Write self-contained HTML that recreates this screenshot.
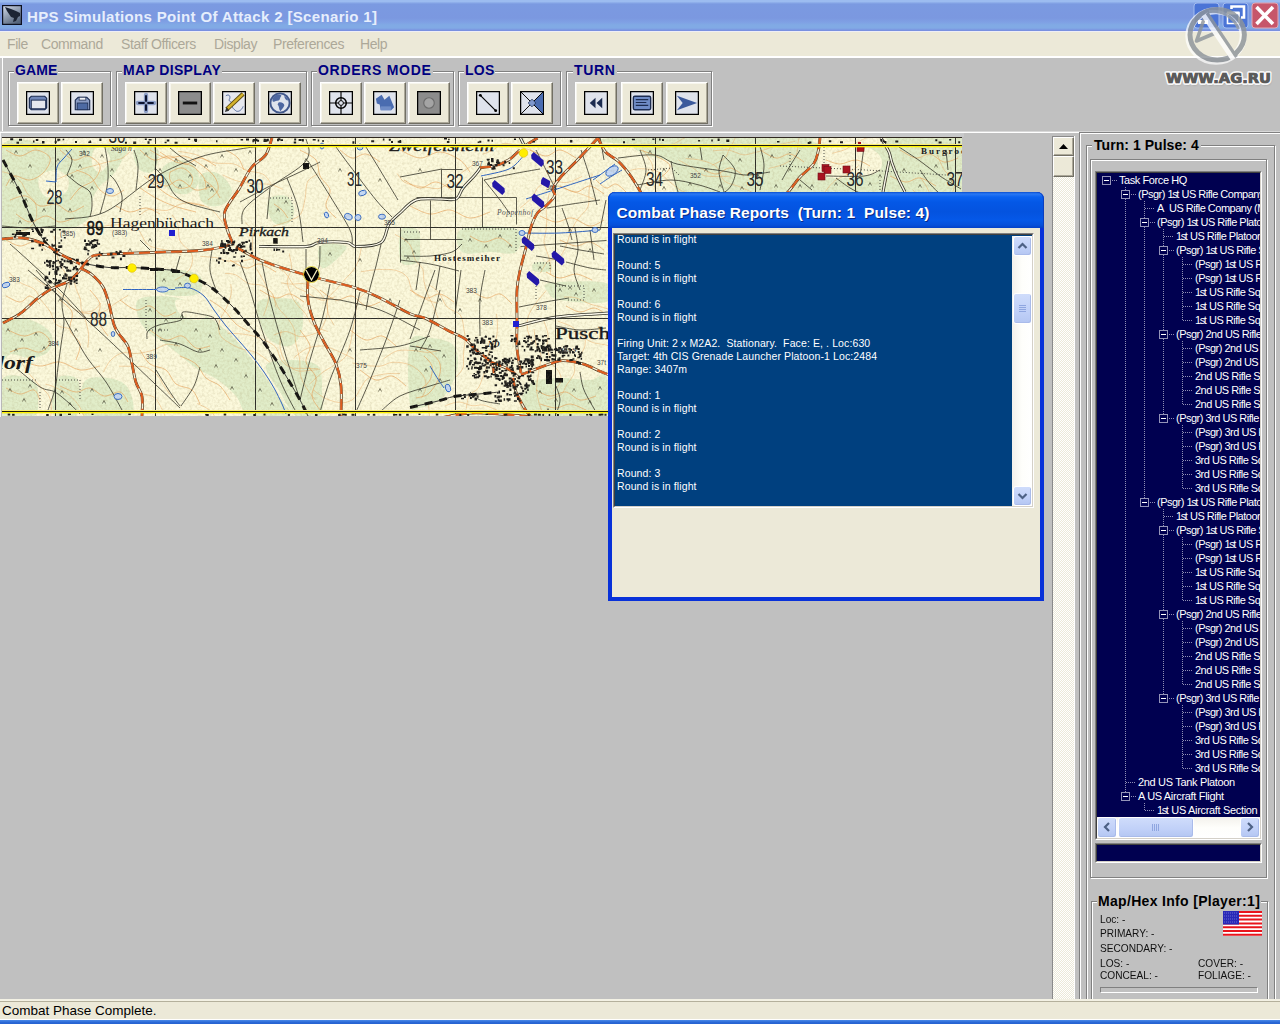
<!DOCTYPE html>
<html>
<head>
<meta charset="utf-8">
<title>HPS Simulations Point Of Attack 2 [Scenario 1]</title>
<style>
html,body{margin:0;padding:0;}
body{width:1280px;height:1024px;overflow:hidden;background:#c0c0c0;font-family:"Liberation Sans",sans-serif;position:relative;}
.abs{position:absolute;}
#titlebar{left:0;top:0;width:1280px;height:32px;background:linear-gradient(to bottom,#9cbcf0 0px,#9cbcf0 1.5px,#7b9ae1 4px,#7b98e0 18px,#7fa0e4 22px,#81aae5 25px,#81aae5 28px,#7990e0 30.500px,#7990e0 31px,#eeeef6 31px,#eeeef6 32px);}
#titletext{left:27px;top:8px;color:#e6eefc;font-weight:bold;font-size:15px;line-height:18px;white-space:nowrap;letter-spacing:0.345px;}
#menubar{left:0;top:32px;width:1280px;height:24px;background:#ece9d8;}
#menubar span{position:absolute;top:4px;font-size:14px;color:#aca899;white-space:nowrap;letter-spacing:-0.4px;}
#menuline{left:0;top:56px;width:1280px;height:2px;background:#fff;}
#toolbar{left:0;top:58px;width:1280px;height:74px;background:#c0c0c0;}
.grp{position:absolute;top:71px;height:55px;border:1px solid #808080;box-shadow:inset 1px 1px 0 #fff,1px 1px 0 #fff;box-sizing:border-box;}
.glabel{position:absolute;top:62px;font-weight:bold;font-size:14px;color:#000080;background:#c0c0c0;white-space:nowrap;line-height:16px;padding:0 1px;}
.tbtn{position:absolute;top:82px;width:42px;height:42px;background:#ece9d8;box-sizing:border-box;border:1px solid;border-color:#fff #716f64 #716f64 #fff;box-shadow:inset -1px -1px 0 #aca899,inset 1px 1px 0 #f7f6ee;}
.tbtn svg{position:absolute;left:8px;top:8px;}
#status{left:0;top:999px;width:1280px;height:21px;background:linear-gradient(to bottom,#f3f1e4 0px,#f3f1e4 2px,#b4b09c 2px,#b4b09c 3px,#ece9d8 3px,#ece9d8 20px,#fff 20px,#fff 21px);}
#statustext{left:2px;top:1003px;font-size:13.5px;color:#000;white-space:nowrap;}
#taskstrip{left:0;top:1020px;width:1280px;height:4px;background:linear-gradient(to bottom,#4a8ae8,#2a68d6 60%,#2562d0);}

.sbtn{background:#ece9d8;box-sizing:border-box;border:1px solid;border-color:#fff #716f64 #716f64 #fff;box-shadow:inset -1px -1px 0 #aca899;}
.xpb{box-sizing:border-box;border:1px solid #fff;border-radius:3px;background:linear-gradient(to bottom,#cfdcfb,#c0d0f8 60%,#b4c6f2);box-shadow:inset -1px -1px 0 #a9bbea, 0 0 0 0 #000;}
.tr{position:absolute;color:#fff;font-size:11px;line-height:14px;white-space:nowrap;letter-spacing:-0.5px;}
.mh{position:absolute;font-size:10.5px;line-height:13px;color:#111;white-space:nowrap;transform:scaleX(0.965);transform-origin:left center;}

.rt{position:absolute;left:2px;color:#fff;font-size:10.5px;line-height:13px;white-space:pre;letter-spacing:0.11px;}
</style>
</head>
<body>
<div id="titlebar" class="abs"></div>
<svg class="abs" style="left:2px;top:5px" width="20" height="20" viewBox="0 0 20 20"><defs><linearGradient id="ig" x1="0" y1="0" x2="0.6" y2="1"><stop offset="0" stop-color="#d4dcec"/><stop offset="1" stop-color="#55657c"/></linearGradient></defs><rect x="0.5" y="0.5" width="19" height="19" fill="url(#ig)" stroke="#0c1020" stroke-width="1.400"/><path d="M3 2 L9 4 L14 6 L18 8 L18 11 L16 12 L14 16 L11 17 L12 13 L9 12 L7 9 L5 6 Z" fill="#1c2434"/></svg>
<div id="titletext" class="abs">HPS Simulations Point Of Attack 2 [Scenario 1]</div>
<div id="menubar" class="abs">
<span style="left:7px">File</span><span style="left:41px">Command</span><span style="left:121px">Staff Officers</span><span style="left:214px">Display</span><span style="left:273px">Preferences</span><span style="left:360px">Help</span>
</div>
<div id="menuline" class="abs"></div>
<div id="toolbar" class="abs"></div>
<!--TOOLBAR-->
<div class="abs" style="left:0;top:58px;width:2px;height:74px;background:#c4c4c4;border-right:1px solid #fff"></div>
<div class="abs" style="left:0;top:131px;width:1280px;height:1px;background:#d8d8d8"></div>
<div class="abs" style="left:0;top:132px;width:1280px;height:1px;background:#fff"></div>
<div class="grp" style="left:8px;width:103px"></div><div class="glabel" style="left:14px;letter-spacing:0.1px">GAME</div>
<div class="grp" style="left:116px;width:191px"></div><div class="glabel" style="left:122px;letter-spacing:0.36px">MAP DISPLAY</div>
<div class="grp" style="left:311px;width:143px"></div><div class="glabel" style="left:317px;letter-spacing:0.7px">ORDERS MODE</div>
<div class="grp" style="left:458px;width:103px"></div><div class="glabel" style="left:464px;letter-spacing:0.23px">LOS</div>
<div class="grp" style="left:566px;width:146px"></div><div class="glabel" style="left:573px;letter-spacing:0.67px">TURN</div>
<!-- GAME buttons -->
<div class="tbtn" style="left:17px"><svg width="24" height="24" viewBox="0 0 25 25"><rect x="0.5" y="0.5" width="24" height="24" fill="#dfe3ec" stroke="#000" stroke-width="1.600"/><path d="M3.5 7.5 L5.5 5.5 H19.5 L21.5 7.5 V17.5 L19.5 19.5 H5.5 L3.5 17.5 Z" fill="#6f86b8" stroke="#1c2c50" stroke-width="1.2"/><rect x="5.5" y="9.5" width="15" height="9" fill="#e4e7ee" stroke="#1c2c50" stroke-width="1"/></svg></div>
<div class="tbtn" style="left:61px"><svg width="24" height="24" viewBox="0 0 25 25"><rect x="0.5" y="0.5" width="24" height="24" fill="#dfe3ec" stroke="#000" stroke-width="1.600"/><path d="M5.5 9.5 L8.5 6.5 H17.5 L20.5 9.5 V19.5 H5.5 Z" fill="#8a9cc4" stroke="#1c2c50" stroke-width="1.2"/><rect x="9.5" y="6.5" width="7" height="3" fill="#f2f3f6" stroke="#1c2c50" stroke-width=".8"/><rect x="7.500" y="12.5" width="11" height="7" fill="#4d6aa3" stroke="#1c2c50" stroke-width=".8"/></svg></div>
<!-- MAP DISPLAY buttons -->
<div class="tbtn" style="left:125px"><svg width="24" height="24" viewBox="0 0 25 25"><rect x="0.5" y="0.5" width="24" height="24" fill="#dfe3ec" stroke="#000" stroke-width="1.600"/><path d="M12.500 4 V21 M4 12.500 H21" stroke="#8ea0c8" stroke-width="4.500" stroke-linecap="round"/><path d="M12.500 4.500 V20.5 M4.500 12.500 H20.5" stroke="#0c1430" stroke-width="2.2"/><circle cx="12.500" cy="12.500" r="1.600" fill="#8ea0c8"/></svg></div>
<div class="tbtn" style="left:169px"><svg width="24" height="24" viewBox="0 0 25 25"><rect x="0.5" y="0.5" width="24" height="24" fill="#8c8c8c" stroke="#000" stroke-width="1.600"/><path d="M5 12.500 H20" stroke="#111" stroke-width="3"/></svg></div>
<div class="tbtn" style="left:213px"><svg width="24" height="24" viewBox="0 0 25 25"><rect x="0.5" y="0.5" width="24" height="24" fill="#e6e8ee" stroke="#000" stroke-width="1.600"/><path d="M4 5 C7 3 9 5 8 8 C6 11 10 11 11 13 C9 16 12 19 15 21 C18 22 21 19 22 16" fill="none" stroke="#51679a" stroke-width="1"/><path d="M22 3 L5 19" stroke="#5b4a12" stroke-width="4.600"/><path d="M22 3 L6 18" stroke="#d4b32c" stroke-width="2.600"/><path d="M3 22 L4.500 17.500 L7.500 20.500 Z" fill="#333"/></svg></div>
<div class="tbtn" style="left:259px"><svg width="24" height="24" viewBox="0 0 25 25"><rect x="0.5" y="0.5" width="24" height="24" fill="#dfe3ec" stroke="#000" stroke-width="1.600"/><circle cx="12.500" cy="12.500" r="10" fill="#dfe3ec" stroke="#42588c" stroke-width="2"/><path d="M6 6 C9 3 13 3 14 5 C12 7 13 9 11 10 C8 10 7 12 5 11 C4 9 5 7 6 6 Z M11 12 C14 11 17 13 17 15 C16 18 14 19 13 21 C11 19 12 16 10 14 Z M17 5 C19 6 21 8 21 10 C19 10 17 8 17 5 Z" fill="#4e67a0"/></svg></div>
<!-- ORDERS buttons -->
<div class="tbtn" style="left:320px"><svg width="24" height="24" viewBox="0 0 25 25"><rect x="0.5" y="0.5" width="24" height="24" fill="#dfe3ec" stroke="#000" stroke-width="1.600"/><path d="M12.500 1 V24 M1 12.500 H24" stroke="#000" stroke-width="1.200"/><circle cx="12.500" cy="12.500" r="5.500" fill="none" stroke="#000" stroke-width="1.600"/><circle cx="12.500" cy="12.500" r="2.500" fill="#dfe3ec" stroke="#000" stroke-width="1"/></svg></div>
<div class="tbtn" style="left:364px"><svg width="24" height="24" viewBox="0 0 25 25"><rect x="0.5" y="0.5" width="24" height="24" fill="#dfe3ec" stroke="#000" stroke-width="1.600"/><path d="M3 8 L9 4 L12 9 L17 5 L22 17 L19 20 L8 20 L7 14 L4 13 Z" fill="#4a6cb0"/><path d="M8 16 L19 16 L19 20 L8 20 Z" fill="#6f8cc6"/></svg></div>
<div class="tbtn" style="left:408px"><svg width="24" height="24" viewBox="0 0 25 25"><rect x="0.5" y="0.5" width="24" height="24" fill="#8c8c8c" stroke="#000" stroke-width="1.600"/><circle cx="12.500" cy="12.500" r="5.500" fill="#a4a4a4" stroke="#6c6c6c" stroke-width="1.200"/></svg></div>
<!-- LOS buttons -->
<div class="tbtn" style="left:467px"><svg width="24" height="24" viewBox="0 0 25 25"><rect x="0.5" y="0.5" width="24" height="24" fill="#dfe3ec" stroke="#000" stroke-width="1.600"/><path d="M4.500 4.500 L20.500 20.500" stroke="#000" stroke-width="1.200"/><circle cx="4.500" cy="4.500" r="1.500" fill="#000"/><circle cx="20.500" cy="20.500" r="1.500" fill="#000"/></svg></div>
<div class="tbtn" style="left:511px"><svg width="24" height="24" viewBox="0 0 25 25"><rect x="0.5" y="0.5" width="24" height="24" fill="#dfe3ec" stroke="#000" stroke-width="1.600"/><path d="M24 1 L12.500 12.500 L24 24 Z" fill="#4a6cb0"/><path d="M1 1 L24 24 M24 1 L1 24" stroke="#000" stroke-width="1"/><path d="M12.500 8.500 L16.500 12.500 L12.500 16.500 L8.500 12.500 Z" fill="#7f98cc" stroke="#1c2c50" stroke-width=".8"/></svg></div>
<!-- TURN buttons -->
<div class="tbtn" style="left:575px"><svg width="24" height="24" viewBox="0 0 25 25"><rect x="0.5" y="0.5" width="24" height="24" fill="#dfe3ec" stroke="#000" stroke-width="1.600"/><path d="M12 7 V18 L6 12.500 Z M19 7 V18 L13 12.500 Z" fill="#1c2c50"/></svg></div>
<div class="tbtn" style="left:621px"><svg width="24" height="24" viewBox="0 0 25 25"><rect x="0.5" y="0.5" width="24" height="24" fill="#dfe3ec" stroke="#000" stroke-width="1.600"/><rect x="3.500" y="5.500" width="18" height="14" rx="1.500" fill="#6f8cc6" stroke="#1c2c50" stroke-width="1.400"/><path d="M6 9 H19 M6 12 H17 M6 15 H19" stroke="#1c2c50" stroke-width="1.200"/></svg></div>
<div class="tbtn" style="left:666px"><svg width="24" height="24" viewBox="0 0 25 25"><rect x="0.5" y="0.5" width="24" height="24" fill="#dfe3ec" stroke="#000" stroke-width="1.600"/><path d="M2 5 L23 12.500 L2 20 L8 12.500 Z" fill="#3c5a9c"/></svg></div>
<!--/TOOLBAR-->
<!--MAP-->
<svg class="abs" style="left:0;top:133px" width="964" height="284" viewBox="0 133 964 284" font-family="'Liberation Serif',serif">
<rect x="0" y="133" width="964" height="4" fill="#c8c9ca"/>
<rect x="0" y="133" width="1" height="284" fill="#f4f4f4"/><rect x="1" y="137" width="1" height="280" fill="#b8b8b8"/>
<clipPath id="mc"><rect x="2" y="137" width="960" height="279"/></clipPath>
<g clip-path="url(#mc)">
<rect x="2" y="137" width="960" height="279" fill="#fcf9dc"/>
<g fill="#e1edc9"><path d="M2 146 C11.7 131 39.7 146 60 146 C80.3 146 113.7 143.7 124 146 C134.3 148.3 124 155 122 160 C120 165 115.7 171.7 112 176 C108.3 180.3 103.3 182 100 186 C96.7 190 93.7 195 92 200 C90.3 205 92.3 211.7 90 216 C87.7 220.3 83 223.7 78 226 C73 228.3 66.3 229.7 60 230 C53.7 230.3 46.7 227.7 40 228 C33.3 228.3 26.3 230.7 20 232 C13.7 233.3 5 250.3 2 236 C-1 221.7 -7.7 161 2 146 Z"/><path d="M136 147 C139.7 145.2 152.3 144.8 156 147 C159.7 149.2 158.7 155.8 158 160 C157.3 164.2 155 170.3 152 172 C149 173.7 143 172.3 140 170 C137 167.7 134.7 161.8 134 158 C133.3 154.2 132.3 148.8 136 147 Z"/><path d="M164 166 C167 163 174.7 159.7 180 160 C185.3 160.3 193 164 196 168 C199 172 199.7 179.7 198 184 C196.3 188.3 190.7 193 186 194 C181.3 195 174 192.7 170 190 C166 187.3 163 182 162 178 C161 174 161 169 164 166 Z"/><path d="M200 176 C202.3 171.7 209.7 171.3 214 172 C218.3 172.7 223 176.7 226 180 C229 183.3 232.3 188 232 192 C231.7 196 227.7 201.7 224 204 C220.3 206.3 214 207 210 206 C206 205 201.7 203 200 198 C198.3 193 197.7 180.3 200 176 Z"/><path d="M270 198 C273 195.3 282 194.3 286 196 C290 197.7 293.3 203.7 294 208 C294.7 212.3 293 219.3 290 222 C287 224.7 279.7 225.7 276 224 C272.3 222.3 269 216.3 268 212 C267 207.7 267 200.7 270 198 Z"/><path d="M320 246 C324 242.3 343 244 346 246 C349 248 342 254.3 338 258 C334 261.7 325 270 322 268 C319 266 316 249.7 320 246 Z"/><path d="M2 322 C5 315.3 13.7 317.7 20 318 C26.3 318.3 34.7 321 40 324 C45.3 327 50.7 331.3 52 336 C53.3 340.7 51.7 348.3 48 352 C44.3 355.7 36 357.7 30 358 C24 358.3 16.7 354 12 354 C7.3 354 3.7 363.3 2 358 C0.3 352.7 -1 328.7 2 322 Z"/><path d="M2 380 C5 373.3 14.3 375.3 20 376 C25.7 376.7 33 380 36 384 C39 388 38.3 394.7 38 400 C37.7 405.3 40 413.3 34 416 C28 418.7 7.3 422 2 416 C-3.3 410 -1 386.7 2 380 Z"/><path d="M56 380 C59.7 373.7 72 375.3 76 378 C80 380.7 80 389.7 80 396 C80 402.3 80.3 412.7 76 416 C71.7 419.3 57.3 422 54 416 C50.7 410 52.3 386.3 56 380 Z"/><path d="M84 382 C88 375.7 100.7 377 108 378 C115.3 379 124.3 381.7 128 388 C131.7 394.3 137.3 411.3 130 416 C122.7 420.7 91.7 421.7 84 416 C76.3 410.3 80 388.3 84 382 Z"/><path d="M156 272 C159.3 268.3 172.7 269.3 180 270 C187.3 270.7 196.7 272.3 200 276 C203.3 279.7 202.7 288.7 200 292 C197.3 295.3 190.7 296 184 296 C177.3 296 164.7 296 160 292 C155.3 288 152.7 275.7 156 272 Z"/><path d="M138 300 C141.7 296.7 152.3 296 160 296 C167.7 296 177.3 297.3 184 300 C190.7 302.7 194.7 308.3 200 312 C205.3 315.7 210.7 318 216 322 C221.3 326 227 331 232 336 C237 341 241 346 246 352 C251 358 256.7 364.7 262 372 C267.3 379.3 273.3 388.7 278 396 C282.7 403.3 294.7 412.7 290 416 C285.3 419.3 259 419.3 250 416 C241 412.7 241.3 402 236 396 C230.7 390 224.7 384.7 218 380 C211.3 375.3 203 372.7 196 368 C189 363.3 182 356.7 176 352 C170 347.3 165 343.7 160 340 C155 336.3 149.7 334 146 330 C142.3 326 139.3 321 138 316 C136.7 311 134.3 303.3 138 300 Z"/><path d="M258 302 C261.3 298 273 297.7 280 298 C287 298.3 296.3 298.7 300 304 C303.7 309.3 303.7 323 302 330 C300.3 337 295.3 344.3 290 346 C284.7 347.7 275 344 270 340 C265 336 262 328.3 260 322 C258 315.7 254.7 306 258 302 Z"/><path d="M266 366 C267.7 360.7 281.3 360 290 360 C298.7 360 312.7 360.7 318 366 C323.3 371.3 321.7 383.7 322 392 C322.3 400.3 324.3 412 320 416 C315.7 420 302.7 420 296 416 C289.3 412 285 400.3 280 392 C275 383.7 264.3 371.3 266 366 Z"/><path d="M401 230 C403.8 224.7 414.8 227.3 418 230 C421.2 232.7 420 240.7 420 246 C420 251.3 421.2 259.3 418 262 C414.8 264.7 403.8 267.3 401 262 C398.2 256.7 398.2 235.3 401 230 Z"/><path d="M462 229 C471 225.2 507 225.2 516 229 C525 232.8 520.3 248.2 516 252 C511.7 255.8 499 252 490 252 C481 252 466.7 255.8 462 252 C457.3 248.2 453 232.8 462 229 Z"/><path d="M534 263 C536.7 261.7 547.3 261.7 550 263 C552.7 264.3 552.7 269.7 550 271 C547.3 272.3 536.7 272.3 534 271 C531.3 269.7 531.3 264.3 534 263 Z"/><path d="M550 283 C559.7 281.500 596.7 279.8 606 283 C615.3 286.2 613.7 299.2 606 302 C598.3 304.8 569.7 301.7 560 300 C550.3 298.3 549.7 294.8 548 292 C546.3 289.2 540.3 284.500 550 283 Z"/><path d="M410 342 C413.3 331 423 337.7 430 338 C437 338.3 447.3 340 452 344 C456.7 348 458 355.3 458 362 C458 368.7 455 377.7 452 384 C449 390.3 445.3 396 440 400 C434.7 404 425 407.3 420 408 C415 408.7 411.7 415 410 404 C408.3 393 406.7 353 410 342 Z"/><path d="M530 384 C535.7 377.7 550 378.7 560 378 C570 377.3 582.3 380.3 590 380 C597.7 379.7 603.3 370 606 376 C608.7 382 619.3 409.3 606 416 C592.7 422.7 538.7 421.3 526 416 C513.3 410.7 524.3 390.3 530 384 Z"/><path d="M636 146 C644.3 144.3 672.7 146 700 146 C727.3 146 766.7 146 800 146 C833.3 146 873 146 900 146 C927 146 951.7 138 962 146 C972.3 154 972.3 186 962 194 C951.7 202 927 194 900 194 C873 194 833.3 194 800 194 C766.7 194 720.3 194 700 194 C679.7 194 682.3 197 678 194 C673.7 191 675.3 181.3 674 176 C672.7 170.7 674 165.3 670 162 C666 158.7 655.7 158.7 650 156 C644.3 153.3 627.7 147.7 636 146 Z"/><path d="M636 137 C690.3 135.8 907.7 135.8 962 137 C1016.3 138.2 1016.3 142.8 962 144 C907.7 145.2 690.3 145.2 636 144 C581.7 142.8 581.7 138.2 636 137 Z"/></g>
<g fill="#fcf9dc"><path d="M40 176 C42.7 172.7 51.3 169.7 56 170 C60.7 170.3 66.3 174.3 68 178 C69.7 181.7 69 188.7 66 192 C63 195.3 54.3 198.3 50 198 C45.7 197.7 41.7 193.7 40 190 C38.3 186.3 37.3 179.3 40 176 Z"/><path d="M94 150 C96 147.3 101.3 146.3 104 148 C106.7 149.7 110.7 156 110 160 C109.3 164 103 171.3 100 172 C97 172.7 93 167.7 92 164 C91 160.3 92 152.7 94 150 Z"/><path d="M822 147 C828.7 142.2 854.3 145.500 864 147 C873.7 148.500 877.3 152.2 880 156 C882.7 159.8 882.7 166.7 880 170 C877.3 173.3 873.3 175 864 176 C854.7 177 831 180.8 824 176 C817 171.2 815.3 151.8 822 147 Z"/><path d="M820 137 C830 135.8 870 135.8 880 137 C890 138.2 890 142.8 880 144 C870 145.2 830 145.2 820 144 C810 142.8 810 138.2 820 137 Z"/><path d="M176 300 C178.7 298.3 191 301.3 196 304 C201 306.7 206 313.3 206 316 C206 318.7 200.3 320.3 196 320 C191.7 319.7 183.3 317.3 180 314 C176.7 310.7 173.3 301.7 176 300 Z"/></g>
<path fill="none" stroke="#e8a25c" stroke-width="0.8" opacity=".8" d="M150 150 C152.7 151.3 160.3 157 166 158 C171.7 159 178.3 155 184 156 C189.7 157 195 160.7 200 164 C205 167.3 211 171.7 214 176 C217 180.3 219 186 218 190 C217 194 209.7 198.3 208 200 M160 152 C162.7 153.7 170.7 159.7 176 162 C181.3 164.3 187.3 163.3 192 166 C196.7 168.7 201.7 174 204 178 C206.3 182 205.7 188 206 190 M170 172 C172 171.3 178.3 167.3 182 168 C185.7 168.7 190.7 173 192 176 C193.3 179 192.3 184 190 186 C187.7 188 181.3 189 178 188 C174.7 187 171.3 182.7 170 180 C168.7 177.3 170 173.3 170 172 M144 176 C146 177.7 151.7 182.7 156 186 C160.3 189.3 165 193.3 170 196 C175 198.7 180.3 200.3 186 202 C191.7 203.7 201 205.3 204 206 M140 188 C142.7 189.7 150.3 195 156 198 C161.7 201 167.3 203.7 174 206 C180.7 208.3 192.3 211 196 212 M226 150 C228 151.3 235 154.7 238 158 C241 161.3 243 168 244 170 M6 150 C8.3 151 15 156 20 156 C25 156 31 149.7 36 150 C41 150.3 48.7 154.3 50 158 C51.3 161.7 47.3 168.3 44 172 C40.7 175.7 35 179.3 30 180 C25 180.7 18 175 14 176 C10 177 7.3 184.3 6 186 M10 200 C12.7 199.3 21 195 26 196 C31 197 35 204.7 40 206 C45 207.3 51 203 56 204 C61 205 65.3 211.7 70 212 C74.7 212.3 81.7 207 84 206 M16 214 C18.3 215.3 25 221.7 30 222 C35 222.3 41 216 46 216 C51 216 55.3 221.7 60 222 C64.7 222.3 71.7 218.7 74 218 M60 150 C62.3 151.7 69.3 159 74 160 C78.7 161 83.7 155 88 156 C92.3 157 99 162 100 166 C101 170 97.3 176.3 94 180 C90.7 183.7 84 184.7 80 188 C76 191.3 71.7 198 70 200 M76 170 C78.3 171 86 172.7 90 176 C94 179.3 96.3 186.7 100 190 C103.7 193.3 108 196 112 196 C116 196 122 191 124 190 M140 150 C142.3 151.7 149 159 154 160 C159 161 164.7 155.3 170 156 C175.3 156.7 181 163.7 186 164 C191 164.3 195 157.7 200 158 C205 158.3 213.3 164.7 216 166 M150 180 C152.7 181 161 186 166 186 C171 186 175 179.3 180 180 C185 180.7 190.7 189 196 190 C201.3 191 209.3 186.7 212 186 M204 180 C205.7 181.3 211.3 185 214 188 C216.7 191 219 196.3 220 198 M116 206 C118.3 207 125 211.7 130 212 C135 212.3 141 207.7 146 208 C151 208.3 157.7 213 160 214 M274 204 C275.3 205 279.7 207.7 282 210 C284.3 212.3 287 216.7 288 218 M300 150 C302.7 151.7 312.7 155.7 316 160 C319.3 164.3 317.7 171 320 176 C322.3 181 329 185 330 190 C331 195 325 201.3 326 206 C327 210.7 334.3 216 336 218 M340 150 C342 151.3 347.7 157.3 352 158 C356.3 158.7 361.3 153.3 366 154 C370.7 154.7 377.7 160.7 380 162 M400 150 C403.3 151.3 413.3 157.7 420 158 C426.7 158.3 433.3 151.7 440 152 C446.7 152.3 455 156.7 460 160 C465 163.3 468.3 170 470 172 M404 180 C406.7 181.3 414.7 187.7 420 188 C425.3 188.3 430.7 181.7 436 182 C441.3 182.3 449.3 188.7 452 190 M410 206 C413.3 207.3 423.3 213.3 430 214 C436.7 214.7 443.3 209.3 450 210 C456.7 210.7 463.3 217.7 470 218 C476.7 218.3 486.7 213 490 212 M470 236 C472.3 237 479 241.7 484 242 C489 242.3 495.3 237.3 500 238 C504.7 238.7 510 244.7 512 246 M530 150 C532.7 151 541 156 546 156 C551 156 555 149.7 560 150 C565 150.3 573.3 156.7 576 158 M560 186 C562.7 187 571 192 576 192 C581 192 585.3 185.7 590 186 C594.7 186.3 601.7 192.7 604 194 M540 216 C542.7 217 550.7 221.7 556 222 C561.3 222.3 566.3 217.3 572 218 C577.7 218.7 584.7 225.7 590 226 C595.3 226.3 601.7 221 604 220 M560 240 C562.7 241 571 245.7 576 246 C581 246.3 585.3 241.3 590 242 C594.7 242.7 601.7 248.7 604 250 M546 272 C548.3 273 555 277.7 560 278 C565 278.3 570.7 273.7 576 274 C581.3 274.3 589.3 279 592 280 M6 240 C8.3 241 15.3 245.7 20 246 C24.7 246.3 29.7 241.3 34 242 C38.3 242.7 44 248.7 46 250 M6 296 C8.3 297 16 302 20 302 C24 302 26.7 295.7 30 296 C33.3 296.3 38.3 302.7 40 304 M8 330 C10.7 331 18.7 335.7 24 336 C29.3 336.3 35.7 331 40 332 C44.3 333 50 338.7 50 342 C50 345.3 44.3 351 40 352 C35.7 353 29 348 24 348 C19 348 12.3 351.3 10 352 M20 360 C23.3 361 33.3 365.7 40 366 C46.7 366.3 53.3 361.3 60 362 C66.7 362.7 73.3 369.3 80 370 C86.7 370.7 96.7 366.7 100 366 M6 388 C8.3 389 15.3 393.7 20 394 C24.7 394.3 30.7 389 34 390 C37.3 391 39 398.3 40 400 M60 300 C62 302 70.3 307 72 312 C73.7 317 68.7 324.7 70 330 C71.3 335.3 79 339 80 344 C81 349 76.7 357.3 76 360 M90 290 C91.7 292.3 98.7 299 100 304 C101.3 309 96.7 314.7 98 320 C99.3 325.3 106.3 333.3 108 336 M60 386 C62.7 387 71 391.7 76 392 C81 392.3 85.3 387.3 90 388 C94.7 388.7 99 395.3 104 396 C109 396.7 116 391 120 392 C124 393 126.7 400.3 128 402 M120 300 C122.7 301.7 131 309 136 310 C141 311 145.3 305 150 306 C154.7 307 159.7 315 164 316 C168.3 317 174 312.7 176 312 M150 330 C152.7 331.7 160.7 339 166 340 C171.3 341 177 334.7 182 336 C187 337.3 191.3 346.3 196 348 C200.7 349.7 207.7 346.3 210 346 M140 350 C141.7 352.3 145.7 360.7 150 364 C154.3 367.3 161.7 366.7 166 370 C170.3 373.3 171.7 380.7 176 384 C180.3 387.3 188 386.7 192 390 C196 393.3 198.7 401.7 200 404 M180 356 C182.7 357.3 191.7 360.3 196 364 C200.3 367.7 202 374.3 206 378 C210 381.7 216 382.3 220 386 C224 389.7 228.3 397.7 230 400 M210 300 C212.3 301.7 219.7 306 224 310 C228.3 314 231.7 320.3 236 324 C240.3 327.7 247.7 330.7 250 332 M260 290 C262.7 291.3 271 297.3 276 298 C281 298.7 285.3 293.3 290 294 C294.7 294.7 301.7 300.7 304 302 M230 260 C232.7 261.3 241 267.3 246 268 C251 268.7 255 263.3 260 264 C265 264.7 273.3 270.7 276 272 M320 290 C322.7 291.7 330.7 299 336 300 C341.3 301 347 295 352 296 C357 297 361.3 305 366 306 C370.7 307 377.7 302.7 380 302 M350 330 C352.7 331.7 360.7 339 366 340 C371.3 341 377 335 382 336 C387 337 393.7 344.3 396 346 M360 370 C362.7 371.7 370.7 379 376 380 C381.3 381 387 375 392 376 C397 377 403.7 384.3 406 386 M300 330 C301.7 332.7 309 340.7 310 346 C311 351.3 305 356.7 306 362 C307 367.3 315 372.3 316 378 C317 383.7 311.3 390.7 312 396 C312.7 401.3 318.7 407.7 320 410 M416 346 C418.3 347 426 349 430 352 C434 355 438.7 359.3 440 364 C441.3 368.7 440 375 438 380 C436 385 431.7 391 428 394 C424.3 397 418 397.3 416 398 M424 356 C425.3 357.7 431 362 432 366 C433 370 431.7 376.3 430 380 C428.3 383.7 423.3 386.7 422 388 M410 290 C412.7 291.3 421 297.3 426 298 C431 298.7 435.3 293.3 440 294 C444.7 294.7 451.7 300.7 454 302 M470 290 C472.7 291.3 481 297.3 486 298 C491 298.7 495.7 293 500 294 C504.3 295 510 302.3 512 304 M536 390 C538.3 391 545 395.7 550 396 C555 396.3 561 391.3 566 392 C571 392.7 575 399.3 580 400 C585 400.7 593.3 396.7 596 396 M540 404 C542.7 404.7 551 408 556 408 C561 408 565 403.7 570 404 C575 404.3 583.3 409 586 410 M566 306 C568.3 307 575.3 311.7 580 312 C584.7 312.3 589.7 307.7 594 308 C598.3 308.3 604 313 606 314 M640 150 C642.7 151 651 153.3 656 156 C661 158.7 669.3 162.3 670 166 C670.7 169.7 664 175 660 178 C656 181 648.3 183 646 184 M700 168 C702.7 169 711 174 716 174 C721 174 725.3 167.7 730 168 C734.7 168.3 741.7 174.7 744 176 M760 150 C762.7 151.3 771 157.3 776 158 C781 158.7 785.3 153.3 790 154 C794.7 154.7 801.7 160.7 804 162 M826 160 C828.3 160.7 835 164 840 164 C845 164 851 159.7 856 160 C861 160.3 867.7 165 870 166 M900 150 C902.7 151.3 911 157.3 916 158 C921 158.7 925.3 153.3 930 154 C934.7 154.7 939.3 161.3 944 162 C948.7 162.7 955.7 158.7 958 158 M890 176 C892.7 177 901 181.7 906 182 C911 182.3 915 177.3 920 178 C925 178.7 933.3 184.7 936 186 M596 180 C597.7 181.3 602.7 187.3 606 188 C609.3 188.7 612.7 183.3 616 184 C619.3 184.7 624.3 190.7 626 192"/>
<path fill="none" stroke="#e8a25c" stroke-width="0.8" opacity=".55" d="M272.500 294.4 C273.6 296.7 276.3 304.4 278.7 308.3 C281.1 312.2 284.500 314.3 287.1 317.8 C289.6 321.2 292.6 324.7 294 329 C295.500 333.3 295 338.6 295.9 343.6 C296.9 348.6 298.8 353.6 299.6 358.9 C300.4 364.3 299.3 370.6 300.500 375.6 C301.8 380.6 304.500 384.9 307 388.9 C309.4 392.9 313.8 397.9 315.2 399.7 M177.9 151.2 C180.8 151.7 190.7 153 195.500 154.500 C200.3 156 203 158.6 206.6 160.1 C210.1 161.500 212.4 162.500 216.9 163.2 C221.4 163.8 228.7 162.7 233.7 163.9 C238.6 165.1 241.6 168.6 246.6 170.3 C251.500 172 259.1 172.1 263.1 174.2 C267.1 176.3 269.4 181.500 270.6 182.9 M54.1 235.8 C54.4 237.500 55.3 241.6 56.1 245.8 C56.8 250 56.7 256.1 58.500 261 C60.2 266 64.7 271.1 66.6 275.7 C68.4 280.2 69.1 286.3 69.6 288.4 M518.9 401.500 C519.9 404 523.3 411.2 524.8 416.6 C526.2 422 525.9 428.8 527.6 433.8 C529.3 438.8 532.2 443.4 535.1 446.6 C537.9 449.8 543.2 452 544.8 453.1 M361.6 245.9 C361.1 248 360.2 254.7 359 258.6 C357.7 262.500 356.2 266.1 353.9 269.4 C351.6 272.8 348.4 275.4 345.4 278.9 C342.3 282.4 338.4 286.9 335.500 290.2 C332.6 293.6 329 295.2 327.7 299 C326.500 302.8 327.1 308.7 328.1 313.1 C329.2 317.500 333.1 323.3 334.1 325.3 M313 389.7 C315.2 391.3 321.4 396.7 326.3 398.8 C331.3 401 338 402.9 342.6 402.8 C347.3 402.7 351.1 400.9 354.1 398.4 C357.2 395.9 358.500 391.3 360.8 387.9 C363.2 384.6 364.1 380.7 368.2 378.3 C372.3 376 380 374.7 385.2 373.9 C390.500 373.1 397.500 373.6 399.9 373.500 M421.2 398.4 C422 396.7 425.6 392 425.9 388.1 C426.3 384.3 425.8 379.3 423.1 375.500 C420.500 371.6 415.1 367.1 410 364.9 C405 362.7 397.7 362.1 392.7 362.3 C387.7 362.500 384.9 365.8 379.9 366.2 C374.8 366.6 367 365.500 362.4 364.9 C357.9 364.4 354.1 363.3 352.4 363 M56.2 179.8 C58.6 178.8 65.7 175.4 70.500 173.500 C75.3 171.500 80.9 169.4 84.9 168.1 C89 166.7 91.4 166.4 95 165.4 C98.6 164.4 102.2 163.4 106.6 162.2 C111 161.1 117.3 160.3 121.2 158.6 C125 156.9 128.3 153.1 129.8 152.1 M543.6 320.3 C544.4 322.6 547.4 330 548 334.3 C548.6 338.6 546.6 341.2 547.2 345.9 C547.7 350.500 549.3 357.9 551.2 362.2 C553.1 366.500 557.2 368.3 558.8 371.500 C560.4 374.8 561.8 378.500 560.9 381.8 C559.9 385.2 554.6 389.9 553.3 391.6 M230.8 284.2 C230.8 285.9 231.8 290.4 231.1 294.4 C230.3 298.4 228.2 303.7 226.2 308.2 C224.2 312.8 220.3 317.3 219.3 321.8 C218.3 326.3 218.2 331.7 220.2 335.4 C222.2 339.1 228 341.9 231.500 344.1 C235.1 346.3 237.3 347.4 241.4 348.8 C245.4 350.2 251.2 350.3 256 352.500 C260.7 354.7 267.500 360.6 269.8 362.2 M8.4 271.8 C10.3 273.6 15.6 279.500 19.9 282.4 C24.2 285.3 30.7 286.3 34.2 289.2 C37.7 292.1 38.2 296.3 40.8 299.9 C43.4 303.500 47.2 306.9 49.9 311 C52.500 315.2 53.2 321.9 56.7 324.8 C60.2 327.8 68.3 328 70.6 328.6 M197.2 403.4 C199.7 404.9 208.8 408.3 212.2 412.3 C215.6 416.3 214.9 422.6 217.500 427.4 C220.2 432.2 224.8 437.2 227.8 440.9 C230.9 444.7 234.500 448.4 235.8 449.9 M19 358.8 C20.500 361.1 24.9 368.1 28.3 372.6 C31.8 377.1 36.3 381.9 39.8 385.9 C43.3 389.9 47.4 392.2 49.3 396.500 C51.2 400.9 51.4 407 51.2 411.9 C51 416.8 48.6 423.6 48.1 426 M309.500 384.1 C311.6 382.2 318.3 375.7 322.3 372.6 C326.4 369.500 330 368.1 333.8 365.4 C337.6 362.8 342.500 360.500 345.3 356.9 C348 353.2 349.1 348 350.4 343.3 C351.7 338.7 352.1 333.1 352.9 329 C353.7 324.9 354.3 323.2 355.1 318.6 C355.9 314 355.8 305.8 357.7 301.3 C359.500 296.8 364.9 293.2 366.3 291.500 M540.500 272.9 C541.8 270.9 545.3 263.3 548.2 260.9 C551.2 258.500 555.3 261 558.3 258.6 C561.3 256.1 564 250.500 566 246.3 C568 242 568.500 237.500 570.4 233 C572.3 228.500 574.500 223.8 577.500 219.4 C580.4 215 586.1 211.7 588 206.8 C589.9 202 588.3 195.8 589.1 190.3 C589.8 184.8 591.9 176.6 592.4 173.8 M326.7 301.4 C326.8 303.4 328.2 309.2 327.2 313.9 C326.3 318.500 323.8 325.7 321.1 329.2 C318.4 332.7 314.9 333.500 311.3 334.7 C307.7 335.9 303.500 337 299.4 336.500 C295.2 335.9 290.9 331.8 286.6 331.6 C282.3 331.3 275.8 334.4 273.7 335 M547 399.8 C549.3 399 557.7 397.1 560.9 394.8 C564.1 392.4 564 389.3 566.2 385.8 C568.4 382.3 572.500 377.6 574 373.6 C575.500 369.7 573.2 366.4 575 362.1 C576.8 357.7 583 352.7 584.6 347.4 C586.2 342 584.6 332.7 584.6 329.7 M281.2 282.9 C283 283.1 287.7 284 291.500 284.1 C295.4 284.3 300.2 282.9 304.4 283.8 C308.6 284.7 313.6 287.1 316.9 289.6 C320.2 292 322.8 296.9 324 298.4 M563.9 297 C565.9 297.1 571.4 296.7 575.9 297.9 C580.4 299.2 585.6 302.500 590.9 304.3 C596.1 306.2 602.4 306.7 607.4 308.8 C612.500 311 616.6 315 621.3 317.1 C626 319.2 631.1 320.3 635.8 321.3 C640.500 322.3 647.1 322.8 649.3 323.1 M140.8 393.7 C143.1 394.4 150.8 394.7 154.4 397.6 C158.1 400.4 160.7 406.8 162.7 410.7 C164.6 414.500 165.6 417 166.3 420.6 C167.1 424.3 166.6 428.8 167.1 432.7 C167.500 436.6 168 440.3 169 444 C169.9 447.8 172.6 451.1 172.8 455.3 C172.9 459.500 170.3 466.7 169.8 469 M383.500 358.9 C385.8 357.500 392.2 352.1 397.3 350.8 C402.4 349.4 409.1 350.4 414.1 350.6 C419.2 350.9 423.1 352.4 427.500 352.4 C431.8 352.3 438.3 350.500 440.4 350.2 M557.8 321.2 C560.1 322.1 567.9 324.4 571.6 326.6 C575.2 328.8 576.3 331.8 579.7 334.4 C583.2 337.1 587.6 340.6 592.4 342.4 C597.1 344.3 603.8 343.7 608.1 345.7 C612.4 347.7 616.4 353.1 618.1 354.6 M545.9 187.2 C548.1 187.1 555 185.8 559.2 186.4 C563.3 187 567.1 189.8 570.9 191.1 C574.6 192.4 577.500 192.7 581.7 194.2 C585.8 195.7 593.4 198.9 595.7 199.9 M83.9 224.9 C86.6 225.1 95.4 226.4 100.1 226.4 C104.8 226.4 107.7 225.2 112.2 225 C116.7 224.7 122.7 224.3 126.9 225 C131.2 225.6 134.500 226 137.8 229.1 C141.1 232.2 143.6 240.500 146.8 243.6 C149.9 246.8 152.500 246.9 156.500 248.2 C160.500 249.4 166.9 250 170.9 251.1 C175 252.2 179.3 254 180.9 254.6 M225.2 273.500 C226.9 273.7 231.8 273.2 235.7 274.9 C239.500 276.500 244.1 281.7 248.4 283.4 C252.7 285.2 257.6 283.6 261.6 285.3 C265.6 287.1 270 290.1 272.4 293.8 C274.8 297.500 275.4 305.3 276 307.6 M222.8 175 C225.1 176 231.500 179.3 236.500 180.8 C241.4 182.2 246.8 183.2 252.3 183.8 C257.8 184.4 264.500 183.4 269.6 184.4 C274.6 185.3 280.6 188.500 282.8 189.3 M395 234.4 C397.500 236 406.2 239.9 409.500 244.1 C412.8 248.2 412.7 254.9 414.9 259.1 C417.1 263.4 421.2 265.7 422.8 269.4 C424.3 273.1 423.2 277.3 424 281.3 C424.8 285.4 426 290 427.4 293.8 C428.8 297.6 430.9 300.4 432.6 304.4 C434.4 308.4 437 315.7 437.8 318 M455.9 377.3 C457 375.7 461.8 371.500 463 367.7 C464.3 363.9 463 359 463.4 354.3 C463.7 349.7 465 344.3 465 340.1 C465.1 335.9 464.7 333.500 463.9 329.3 C463.1 325.1 463.1 318.8 460.3 315.1 C457.500 311.3 450.7 310.6 447.1 307 C443.6 303.3 442.1 296.7 439 292.9 C436 289.2 430.500 285.9 428.8 284.500 M293.8 357.6 C296.1 356.1 302.3 350.4 307.2 348.500 C312.1 346.6 318 345.500 323.500 346.1 C328.9 346.7 334.6 349.9 339.7 352 C344.8 354.2 351.6 357.8 354 358.9 M445.3 405.7 C447.500 405.1 454.3 402 458.8 402 C463.3 402 468.1 405.2 472.2 405.7 C476.3 406.2 479.3 404.3 483.500 405.1 C487.6 405.8 492.500 408.4 497.2 410.3 C501.9 412.1 509.1 415.4 511.500 416.4 M360.8 271.8 C363.7 271.4 372.2 269.8 378 269.6 C383.7 269.3 390.6 269 395.500 270.3 C400.4 271.6 404.4 273.500 407.3 277.2 C410.3 280.8 409.8 288.4 413.1 292.1 C416.4 295.9 422.8 297.9 426.9 299.7 C431 301.6 435.9 302.7 437.7 303.3 M473 164.9 C471.2 166.2 466.1 169.6 462.3 172.3 C458.500 175.1 453.9 179 450.2 181.7 C446.4 184.3 443.4 187.3 439.9 188.3 C436.3 189.3 433 188.1 428.8 187.7 C424.7 187.2 419.1 186.500 415 185.500 C410.9 184.6 407.1 184 404.1 182 C401.1 180 398.3 174.9 397.1 173.4 M534 329 C534.4 331.7 535 340.7 536.1 345 C537.3 349.4 540.6 351.3 541 355.3 C541.500 359.4 539.8 364.4 539.1 369.500 C538.4 374.6 537 381.3 536.8 385.8 C536.500 390.3 536.6 392.1 537.500 396.4 C538.4 400.6 539.9 407.2 542 411.2 C544 415.3 547 416.7 549.8 420.6 C552.500 424.500 556.9 432.2 558.3 434.500 M227.500 333.2 C230.3 333.4 238.9 333.4 244.3 334.3 C249.8 335.1 255.2 336.3 260.4 338.4 C265.500 340.4 271.8 343.1 275.3 346.7 C278.8 350.4 278.7 356.7 281.3 360.1 C283.9 363.6 287.1 366.2 290.7 367.6 C294.4 368.9 298.6 368.2 303.2 368.3 C307.8 368.500 315.8 368.6 318.3 368.6 M80.6 312.6 C83 312.8 91 314 95.3 313.6 C99.500 313.2 102.7 312.1 106.1 310.4 C109.500 308.6 112.1 305.7 115.7 303.2 C119.3 300.7 125.8 296.8 127.9 295.500 M200.2 256.3 C202.9 256.6 212.1 257 216.4 257.8 C220.8 258.500 222.1 260.3 226.3 260.8 C230.4 261.4 236.6 261.4 241.500 261.1 C246.3 260.7 250.7 258.500 255.4 258.7 C260.1 258.9 265 260 269.6 262.1 C274.2 264.2 280.7 269.7 283 271.2 M428.6 404.6 C428.7 407.1 429.7 415.1 429.2 419.8 C428.7 424.6 426.7 429 425.6 432.9 C424.6 436.8 424.7 439.500 422.9 443.4 C421.1 447.3 417.8 452.4 414.8 456.1 C411.8 459.7 406.6 463.8 405 465.4 M549.2 193.500 C548.7 196.2 546.7 204.8 546.3 209.500 C545.9 214.2 547 217.500 546.8 221.4 C546.7 225.3 546.1 229.3 545.6 232.9 C545.2 236.500 543.500 238.6 544.1 243 C544.8 247.500 548.500 254.4 549.6 259.7 C550.6 265.1 550.500 272.500 550.6 275 M482.7 154.2 C484.4 153.500 489.8 151.8 493.1 150 C496.4 148.3 499.2 144.7 502.500 143.8 C505.8 142.9 508.6 143.7 512.9 144.6 C517.2 145.6 523.9 147.8 528.1 149.4 C532.4 150.9 536.6 153.1 538.3 153.9 M245.4 222.6 C246.500 224.1 250.8 227.500 252 231.3 C253.1 235.2 252.1 240.3 252.4 245.500 C252.7 250.7 252.6 257.7 253.9 262.6 C255.2 267.500 257.9 270.500 260.1 274.8 C262.4 279.1 265.9 284 267.3 288.2 C268.6 292.500 269 295.6 268.4 300.2 C267.8 304.7 264.4 313.1 263.6 315.7 M546.1 290.6 C544.4 292.7 538.7 299.2 535.7 303.4 C532.8 307.6 529.8 311.6 528.4 315.9 C527.1 320.2 526.9 324.9 527.500 329.3 C528.1 333.6 531.500 339.8 532.2 341.9 M273 226.4 C275.7 225.500 284.6 223 289.2 220.9 C293.8 218.9 297.9 217.8 300.6 214.1 C303.2 210.4 303.9 204.1 305.1 198.6 C306.2 193.2 305.500 185.6 307.6 181.500 C309.8 177.3 316.3 175.1 318 173.8 M118.9 366.2 C121.500 366.2 129.9 366.2 134.500 366.4 C139.1 366.6 142.500 365.9 146.4 367.500 C150.2 369 154.7 372.500 157.7 375.7 C160.7 379 162 383.3 164.6 387 C167.1 390.7 171.500 396.2 172.9 398 M103.3 372.3 C104.500 370.3 107.500 363.500 110.7 360.3 C113.8 357 117.7 354.1 122.1 353 C126.4 351.9 131.500 354 136.8 353.500 C142.1 353 148.8 351.500 153.7 349.9 C158.7 348.4 162.2 345 166.6 344.3 C171 343.7 177.8 345.9 180 346.2 M172.2 214.7 C173.1 216.4 176.6 220.3 177.9 224.6 C179.2 229 177.8 236 179.9 240.7 C182 245.3 188.7 248.7 190.8 252.3 C192.8 255.8 192.7 259 192.2 262.2 C191.7 265.500 190.6 268.7 187.7 271.7 C184.8 274.7 177 278.7 174.9 280.1 M496.6 313.8 C496.7 315.6 497.4 320.9 497.4 325.1 C497.3 329.2 497.6 333.9 496.1 338.500 C494.6 343.2 490 348.6 488.500 353 C487 357.3 487.7 361 486.9 364.6 C486.1 368.3 485.2 370.7 483.7 374.7 C482.2 378.6 480.500 384.8 478.1 388.3 C475.7 391.7 471.2 392 469.2 395.4 C467.3 398.8 466.8 406.4 466.3 408.6 M45.4 384.1 C47.1 384.6 51.4 385.6 55.500 387.500 C59.500 389.4 65.8 392.3 69.8 395.500 C73.8 398.7 76.9 402.8 79.500 406.6 C82.1 410.500 82.8 414.7 85.500 418.4 C88.1 422.2 93.8 427.4 95.4 429.2 M281.2 330.3 C281 333.2 279.4 342.7 280.2 348.1 C281 353.500 283.3 358.8 286 362.6 C288.7 366.3 292.6 369.3 296.6 370.6 C300.500 371.9 305.7 370.6 309.7 370.4 C313.6 370.2 318.500 369.4 320.2 369.2 M139.500 215.3 C141.2 214.3 145.1 210 149.7 209.2 C154.3 208.3 161.9 211.3 167 210.4 C172.2 209.6 176 205.1 180.7 204 C185.4 202.8 190.3 202.500 195.3 203.4 C200.2 204.2 206.4 206.3 210.500 208.9 C214.6 211.4 217.1 215.500 219.8 218.8 C222.6 222.1 225.6 227 226.8 228.7 M289.2 253.3 C289.500 255.8 291.8 264 291.500 268.6 C291.2 273.1 287.4 276.6 287.2 280.7 C287.1 284.8 289.2 289.6 290.7 293.3 C292.1 297 293.3 299.6 295.9 303.1 C298.4 306.6 303.2 310.7 305.9 314.3 C308.7 318 308.9 322.3 312.500 325.2 C316.1 328.1 325.2 330.500 327.7 331.500 M14.2 233.1 C16.7 232.2 25.500 230.4 29.2 227.8 C32.9 225.2 35.2 221.9 36.2 217.7 C37.2 213.6 36.9 207.1 35.3 203 C33.8 198.9 29.500 196.8 27 193.1 C24.4 189.4 23.4 184.2 20.1 180.8 C16.7 177.4 10.9 174.2 6.7 172.7 C2.500 171.2 -3 172 -4.9 171.8 M519.9 208.3 C521.9 206.500 528.9 201.1 532.1 197.4 C535.3 193.7 535.8 188.7 539.3 186.1 C542.8 183.500 548.4 182.3 553.1 181.7 C557.9 181 562.8 183.2 567.6 182.4 C572.4 181.500 579.6 177.500 582 176.500 M73.6 277.2 C74 279 74.8 284.6 75.9 288.2 C77 291.9 79.4 295.4 80.3 299 C81.2 302.6 80.500 306.1 81.4 309.7 C82.3 313.2 84.3 316.2 85.500 320.3 C86.7 324.500 88.2 330 88.6 334.500 C89 339 87.9 345.4 87.8 347.6 M34.7 277.9 C36.1 278.9 39.7 282.2 43.1 284 C46.500 285.8 51.2 286.1 55.1 288.8 C59 291.500 63 296.4 66.500 300.1 C70.1 303.7 72.2 309 76.500 310.8 C80.7 312.6 88.1 312.3 92.1 311 C96.2 309.8 99.4 304.500 100.8 303.2 M279.500 266 C280.8 267.7 285.2 272.7 287.8 276.2 C290.4 279.6 292 284 295 286.6 C298 289.2 301.500 289.500 305.9 291.8 C310.2 294 316.4 299.3 321.3 300.1 C326.2 300.9 333 297.2 335.3 296.6 M920.1 177 C921.4 179.1 925.6 184.500 927.9 189.3 C930.2 194.1 933 200.4 933.9 205.6 C934.8 210.8 933.500 215.9 933.3 220.6 C933.1 225.2 932.8 231.4 932.7 233.500 M685.8 158.500 C688.6 158.8 697.500 159.2 702.7 160.7 C707.9 162.1 713.500 164 717.1 167.4 C720.7 170.7 720.6 177.7 724 180.8 C727.500 183.9 733.500 184.4 737.8 186.1 C742 187.9 745.7 189 749.6 191.1 C753.500 193.3 758 195.7 761.2 199.1 C764.500 202.4 765.3 208.4 769.2 211.3 C773 214.2 781.7 215.7 784.2 216.500 M832.1 153.3 C834.2 152.7 841.1 151.2 844.8 149.7 C848.500 148.1 850 146.2 854.2 143.9 C858.3 141.500 865.7 138.7 869.6 135.500 C873.6 132.2 875 128.2 877.9 124.2 C880.8 120.2 885.4 113.500 886.9 111.4 M642.9 149.8 C644.4 152.1 650.4 159.8 652 163.9 C653.7 168 652.2 170.1 652.8 174.4 C653.3 178.7 653.500 185 655.3 189.4 C657 193.8 662 198.9 663.3 200.8 M678.4 159.9 C680.9 161.3 689.1 165.7 693.3 168.3 C697.500 170.9 699.4 174 703.500 175.4 C707.7 176.7 713.500 176.500 718 176.6 C722.500 176.7 728.500 176.3 730.6 176.2 M654.9 148.3 C657.2 147.9 663.9 147.500 668.6 145.9 C673.3 144.3 678.500 141.3 683.1 138.7 C687.6 136.1 693.2 134.3 696 130.500 C698.8 126.7 699.4 118.3 700 115.9 M913 189.8 C914.1 191.2 916.8 196.3 919.500 198.500 C922.3 200.7 926.2 200.6 929.500 202.8 C932.7 205.1 935.500 210.4 939 211.9 C942.6 213.500 948.8 212.1 950.7 212.2 M886.8 178.9 C886.1 181.500 883.7 189.7 882.500 194.8 C881.2 199.9 878.9 205.2 879.2 209.500 C879.500 213.8 883.2 216.7 884.500 220.6 C885.8 224.4 886.6 230.6 887 232.6 M713 150.8 C715.7 150.7 724 149.6 728.9 150.2 C733.9 150.9 738.6 154.3 742.7 154.7 C746.7 155.2 749.500 153.8 753.4 153 C757.3 152.1 761.8 150.7 765.9 149.3 C770.1 148 773.4 146.2 778.3 144.8 C783.1 143.500 792.3 141.9 795.1 141.3 M639.2 189.500 C639.9 192.2 643 201.1 643.3 206 C643.7 210.9 643.7 214.8 641.4 218.9 C639.1 223 632.7 226.8 629.500 230.6 C626.3 234.3 626 238.8 622.3 241.500 C618.6 244.2 609.9 246 607.4 246.9 M858.7 165.8 C856.7 167.3 850.8 172.2 846.8 174.6 C842.9 177.1 838.6 177.8 835 180.6 C831.4 183.4 828 187.9 825.2 191.6 C822.4 195.3 819.500 200.8 818.3 202.7 M937.2 154.4 C938.4 157 941.6 166.2 944.4 170.4 C947.3 174.500 952.7 175.9 954.1 179.4 C955.500 182.9 954.500 186.8 953 191.2 C951.500 195.7 948.7 202.4 945 206.1 C941.4 209.8 935.1 212.7 931.1 213.500 C927 214.4 924.2 212.8 920.7 211.2 C917.1 209.7 913.8 206.500 909.8 204.3 C905.7 202.2 898.7 199.2 896.4 198.2 M626.6 171.3 C628.9 170.9 635 168.7 640.1 168.7 C645.3 168.7 652.7 169.500 657.3 171.4 C661.9 173.3 663.7 177 667.8 180.2 C671.9 183.500 677.4 188.6 681.7 190.9 C686 193.2 691.6 193.7 693.6 194.3 M768.6 168.500 C771.3 167.7 780.2 166 784.8 163.7 C789.4 161.4 793.9 158.2 796.1 154.6 C798.3 151.1 797.1 146.7 798.1 142.3 C799.1 137.9 800.4 132.1 802.1 128.3 C803.9 124.4 805.8 121.9 808.7 119.2 C811.500 116.500 816.500 115.7 819.3 112.2 C822 108.7 823.9 103.500 825.2 98.2 C826.4 92.9 826.500 83.4 826.8 80.4 M712.3 165.1 C714.4 164 721.8 161 724.6 158.2 C727.500 155.500 727.6 152.3 729.500 148.6 C731.3 144.9 734.7 141.1 735.6 136.2 C736.500 131.3 734.1 124.2 735 119.2 C735.8 114.3 739.3 110.500 740.7 106.500 C742.1 102.500 742.8 99.500 743.4 95.1 C743.9 90.7 744.1 82.500 744.2 80"/>
<path fill="none" stroke="#4a4a3a" stroke-width="0.7" d="M14.500 153.500 L16 150.500 L17.500 153.500 M28.500 167.500 L30 164.500 L31.500 167.500 M10.500 183.500 L12 180.500 L13.500 183.500 M24.500 201.500 L26 198.500 L27.500 201.500 M42.500 211.500 L44 208.500 L45.500 211.500 M56.500 161.500 L58 158.500 L59.500 161.500 M70.500 177.500 L72 174.500 L73.500 177.500 M82.500 153.500 L84 150.500 L85.500 153.500 M90.500 189.500 L92 186.500 L93.500 189.500 M68.500 211.500 L70 208.500 L71.500 211.500 M18.500 223.500 L20 220.500 L21.500 223.500 M48.500 191.500 L50 188.500 L51.500 191.500 M100.500 157.500 L102 154.500 L103.500 157.500 M110.500 171.500 L112 168.500 L113.500 171.500 M78.500 167.500 L80 164.500 L81.500 167.500 M144.500 155.500 L146 152.500 L147.500 155.500 M158.500 171.500 L160 168.500 L161.500 171.500 M174.500 161.500 L176 158.500 L177.500 161.500 M188.500 177.500 L190 174.500 L191.500 177.500 M204.500 167.500 L206 164.500 L207.500 167.500 M220.500 157.500 L222 154.500 L223.500 157.500 M234.500 171.500 L236 168.500 L237.500 171.500 M210.500 191.500 L212 188.500 L213.500 191.500 M178.500 187.500 L180 184.500 L181.500 187.500 M248.500 153.500 L250 150.500 L251.500 153.500 M206.500 187.500 L208 184.500 L209.500 187.500 M276.500 211.500 L278 208.500 L279.500 211.500 M284.500 203.500 L286 200.500 L287.500 203.500 M328.500 255.500 L330 252.500 L331.500 255.500 M6.500 331.500 L8 328.500 L9.500 331.500 M20.500 341.500 L22 338.500 L23.500 341.500 M34.500 335.500 L36 332.500 L37.500 335.500 M42.500 349.500 L44 346.500 L45.500 349.500 M14.500 351.500 L16 348.500 L17.500 351.500 M8.500 391.500 L10 388.500 L11.500 391.500 M22.500 401.500 L24 398.500 L25.500 401.500 M28.500 387.500 L30 384.500 L31.500 387.500 M60.500 393.500 L62 390.500 L63.500 393.500 M68.500 405.500 L70 402.500 L71.500 405.500 M90.500 391.500 L92 388.500 L93.500 391.500 M102.500 403.500 L104 400.500 L105.500 403.500 M118.500 397.500 L120 394.500 L121.500 397.500 M162.500 281.500 L164 278.500 L165.500 281.500 M178.500 285.500 L180 282.500 L181.500 285.500 M190.500 281.500 L192 278.500 L193.500 281.500 M148.500 311.500 L150 308.500 L151.500 311.500 M164.500 321.500 L166 318.500 L167.500 321.500 M180.500 317.500 L182 314.500 L183.500 317.500 M194.500 331.500 L196 328.500 L197.500 331.500 M208.500 337.500 L210 334.500 L211.500 337.500 M220.500 351.500 L222 348.500 L223.500 351.500 M234.500 361.500 L236 358.500 L237.500 361.500 M244.500 377.500 L246 374.500 L247.500 377.500 M258.500 391.500 L260 388.500 L261.500 391.500 M270.500 405.500 L272 402.500 L273.500 405.500 M198.500 351.500 L200 348.500 L201.500 351.500 M214.500 367.500 L216 364.500 L217.500 367.500 M158.500 331.500 L160 328.500 L161.500 331.500 M174.500 345.500 L176 342.500 L177.500 345.500 M230.500 389.500 L232 386.500 L233.500 389.500 M404.500 241.500 L406 238.500 L407.500 241.500 M412.500 253.500 L414 250.500 L415.500 253.500 M406.500 259.500 L408 256.500 L409.500 259.500 M468.500 241.500 L470 238.500 L471.500 241.500 M484.500 247.500 L486 244.500 L487.500 247.500 M498.500 237.500 L500 234.500 L501.500 237.500 M508.500 247.500 L510 244.500 L511.500 247.500 M538.500 269.500 L540 266.500 L541.500 269.500 M558.500 291.500 L560 288.500 L561.500 291.500 M574.500 295.500 L576 292.500 L577.500 295.500 M592.500 291.500 L594 288.500 L595.500 291.500 M568.500 289.500 L570 286.500 L571.500 289.500 M414.500 351.500 L416 348.500 L417.500 351.500 M428.500 347.500 L430 344.500 L431.500 347.500 M442.500 357.500 L444 354.500 L445.500 357.500 M424.500 371.500 L426 368.500 L427.500 371.500 M438.500 381.500 L440 378.500 L441.500 381.500 M418.500 391.500 L420 388.500 L421.500 391.500 M538.500 393.500 L540 390.500 L541.500 393.500 M554.500 401.500 L556 398.500 L557.500 401.500 M572.500 391.500 L574 388.500 L575.500 391.500 M588.500 403.500 L590 400.500 L591.500 403.500 M598.500 389.500 L600 386.500 L601.500 389.500 M546.500 411.500 L548 408.500 L549.500 411.500 M648.500 153.500 L650 150.500 L651.500 153.500 M662.500 171.500 L664 168.500 L665.500 171.500 M688.500 157.500 L690 154.500 L691.500 157.500 M704.500 171.500 L706 168.500 L707.500 171.500 M718.500 187.500 L720 184.500 L721.500 187.500 M688.500 185.500 L690 182.500 L691.500 185.500 M738.500 161.500 L740 158.500 L741.500 161.500 M756.500 177.500 L758 174.500 L759.500 177.500 M770.500 157.500 L772 154.500 L773.500 157.500 M788.500 171.500 L790 168.500 L791.500 171.500 M798.500 187.500 L800 184.500 L801.500 187.500 M774.500 187.500 L776 184.500 L777.500 187.500 M810.500 187.500 L812 184.500 L813.500 187.500 M834.500 185.500 L836 182.500 L837.500 185.500 M868.500 185.500 L870 182.500 L871.500 185.500 M888.500 157.500 L890 154.500 L891.500 157.500 M902.500 171.500 L904 168.500 L905.500 171.500 M918.500 187.500 L920 184.500 L921.500 187.500 M934.500 167.500 L936 164.500 L937.500 167.500 M948.500 181.500 L950 178.500 L951.500 181.500 M944.500 153.500 L946 150.500 L947.500 153.500 M878.500 177.500 L880 174.500 L881.500 177.500 M740.500 189.500 L742 186.500 L743.500 189.500 M662.500 189.500 L664 186.500 L665.500 189.500 M304.500 161.500 L306 158.500 L307.500 161.500 M338.500 171.500 L340 168.500 L341.500 171.500 M378.500 181.500 L380 178.500 L381.500 181.500 M418.500 171.500 L420 168.500 L421.500 171.500 M358.500 261.500 L360 258.500 L361.500 261.500 M388.500 301.500 L390 298.500 L391.500 301.500 M438.500 301.500 L440 298.500 L441.500 301.500 M478.500 301.500 L480 298.500 L481.500 301.500 M348.500 351.500 L350 348.500 L351.500 351.500 M378.500 391.500 L380 388.500 L381.500 391.500 M458.500 311.500 L460 308.500 L461.500 311.500 M128.500 251.500 L130 248.500 L131.500 251.500 M148.500 241.500 L150 238.500 L151.500 241.500 M58.500 301.500 L60 298.500 L61.500 301.500 M98.500 351.500 L100 348.500 L101.500 351.500 M74.500 331.500 L76 328.500 L77.500 331.500 M588.500 251.500 L590 248.500 L591.500 251.500 M568.500 231.500 L570 228.500 L571.500 231.500"/>
<path fill="none" stroke="#333" stroke-width="0.9" stroke-dasharray="1 2" d="M270 198 L292 198 L292 224 M404 232 L420 232 M462 229 L516 229 M516 229 L516 252 M534 263 L550 263 L550 271 M536 286 L536 300 M556 286 L584 286 L584 300 L566 300 M146 300 L146 330 L170 330 M56 380 L80 380 L80 400 M2 380 L36 380 M824 147 L824 166 M880 180 L880 194 M648 170 L672 168 L680 176 M790 152 L790 166 M140 196 L140 216 M40 392 L40 412 M780 166 L866 170 L946 175"/>
<path fill="none" stroke="#2e2e26" stroke-width="0.8" d="M65 219 C71.7 217.8 90 219 105 212 C120 205 139.2 186.2 155 177 C170.8 167.8 185.8 161.7 200 157 C214.2 152.3 229.7 150.8 240 149 C250.3 147.2 258.3 146.500 262 146 M67 175 C68.8 176.500 74.2 181.2 78 184 C81.8 186.8 87.7 188.3 90 192 C92.3 195.7 92 201.8 92 206 C92 210.2 90.3 215.2 90 217 M66 150 C67 151.7 71.8 155.8 72 160 C72.2 164.2 67.8 172.500 67 175 M105 147 C105.500 150.500 107.7 161.3 108 168 C108.3 174.7 108.3 179.3 107 187 C105.7 194.7 101.2 209.500 100 214 M110 175 C111 176.2 114 178.500 116 182 C118 185.500 121.3 191 122 196 C122.7 201 120.3 209.3 120 212 M134 150 C134.7 152.7 137.7 159.3 138 166 C138.3 172.7 136.3 186 136 190 M155 147 C155.2 149.2 156 156.2 156 160 C156 163.8 155.2 168.3 155 170 M155 168 C156.8 170 162.7 175.500 166 180 C169.3 184.500 171 191 175 195 C179 199 182.500 201.2 190 204 C197.500 206.8 215 210.7 220 212 M170 148 C171.7 149.3 175.7 153 180 156 C184.3 159 193.3 164.3 196 166 M240 202 C245 199.3 260 191 270 186 C280 181 291.7 176 300 172 C308.3 168 316.7 163.7 320 162 M242 224 C242.500 221.3 240 214.3 245 208 C250 201.7 262.7 193 272 186 C281.3 179 294.8 171.500 301 166 C307.2 160.500 308.2 157.500 309 153 C309.8 148.500 306.500 141.3 306 139 M308 161 C311.7 166.8 323 184.500 330 196 C337 207.500 346.3 221.7 350 230 C353.7 238.3 351.7 243.3 352 246 M287 178 C288.8 183 295.3 197.3 298 208 C300.7 218.7 302.2 236.3 303 242 M270 188 L267 219 M336 147 C338.3 150.2 343.3 157.2 350 166 C356.7 174.8 369 191.500 376 200 C383 208.500 389.3 214.2 392 217 M366 147 C368.3 150.8 374.7 161.2 380 170 C385.3 178.8 395 195 398 200 M381 244 C380.2 247.7 377.8 258.7 376 266 C374.2 273.3 371.7 280.7 370 288 C368.3 295.3 366.7 306.3 366 310 M306 249 L306 270 M320 246 C319.8 249.500 320.3 262.3 319 267 C317.7 271.7 313.2 272.8 312 274 M2 226 C6.7 226.3 21.2 228 30 228 C38.8 228 50.8 226.3 55 226 M10 244 C13.3 247 21.7 254.3 30 262 C38.3 269.7 50.7 280.7 60 290 C69.3 299.3 81.7 313.3 86 318 M28 270 C37.8 278.3 65.8 301 87 320 C108.2 339 139.500 369.3 155 384 C170.500 398.7 175.8 404 180 408 M36 270 L62 300 M67 284 C66.2 287.2 62.500 296.7 62 303 C61.500 309.3 64.2 315 64 322 C63.8 329 62 337.500 61 345 C60 352.500 59 359.7 58 367 C57 374.3 56.7 381.8 55 389 C53.3 396.2 49.2 406.500 48 410 M64 317 C65.8 320.3 71 330 75 337 C79 344 82.8 351.500 88 359 C93.2 366.500 100.3 373.500 106 382 C111.7 390.500 119.3 405.3 122 410 M16 368 C20 371.2 33.500 383 40 387 C46.500 391 50 389.2 55 392 C60 394.8 65.8 400.3 70 404 C74.2 407.7 78.3 412.3 80 414 M200 367 C199 370.2 197.2 379.500 194 386 C190.8 392.500 183.2 402.7 181 406 M156 370 C158.7 374.2 168 389 172 395 C176 401 178.7 404.2 180 406 M147 339 C147.2 337.7 146 333.3 148 331 C150 328.7 153.500 326.8 159 325 C164.500 323.2 177 322.2 181 320 C185 317.8 179.8 313 183 312 C186.2 311 197.2 313.7 200 314 M200 314 C202.3 314.7 210.7 315.3 214 318 C217.3 320.7 219 328 220 330 M160 340 C163.3 340.7 173.7 342 180 344 C186.3 346 193 351 198 352 C203 353 208 350.3 210 350 M140 240 L150 250 M180 256 L176 270 M212 250 C211.7 253.3 209.3 263.3 210 270 C210.7 276.7 215 286.7 216 290 M240 262 C241.7 266.7 246.3 278.7 250 290 C253.7 301.3 257 315 262 330 C267 345 274.3 366.3 280 380 C285.7 393.7 293.3 406.7 296 412 M262 262 C263.3 268.3 266.3 285.3 270 300 C273.7 314.7 279 333.3 284 350 C289 366.7 297.3 391.7 300 400 M330 284 C328.7 290 325.3 307.3 322 320 C318.7 332.7 313.7 346.7 310 360 C306.3 373.3 301.7 393.3 300 400 M360 292 C358.3 298.3 355 315.3 350 330 C345 344.7 335 366.3 330 380 C325 393.7 321.7 406.7 320 412 M400 300 C397.7 306.7 391 326.7 386 340 C381 353.3 375 368 370 380 C365 392 358.3 406.7 356 412 M435 270 C433.2 275 428.2 288.500 424 300 C419.8 311.500 412.3 332.500 410 339 M461 270 L455 314 M485 270 C484.2 275 480.8 289 480 300 C479.2 311 480 330 480 336 M410 346 L441 351 M440 290 C438.3 296.7 433.3 320 430 330 C426.7 340 421.7 346.7 420 350 M340 300 C346.7 301.7 366.7 305 380 310 C393.3 315 413.3 326.7 420 330 M360 350 C366.7 349.3 388.3 348.3 400 346 C411.7 343.7 425 337.7 430 336 M300 296 L340 300 M380 412 C383.3 409.3 391.7 400.3 400 396 C408.3 391.7 421.7 388.7 430 386 C438.3 383.3 446.7 381 450 380 M400 177 L442 169 M484 180 C488.7 179 502.7 175.8 512 174 C521.3 172.2 535.3 169.8 540 169 M547 208 C551.2 207.3 563.2 205.3 572 204 C580.8 202.7 595.3 200.7 600 200 M562 208 C563 210.8 566.3 219.7 568 225 C569.7 230.3 571.3 237.500 572 240 M581 150 C582.500 154.7 587.3 168.8 590 178 C592.7 187.2 595.8 200.500 597 205 M462 244 C460.3 245.3 457.3 250 452 252 C446.7 254 438 255.3 430 256 C422 256.7 408.3 256 404 256 M400 260 C405 260.7 420.2 262.2 430 264 C439.8 265.8 454.2 269.8 459 271 M420 262 L416 290 M440 266 L436 290 M484 180 C486.7 183.3 495.7 194.3 500 200 C504.3 205.7 508.3 211.7 510 214 M536 150 C537.7 153.3 542.7 163.3 546 170 C549.3 176.7 554.3 186.7 556 190 M560 246 C563.3 246.7 572.7 248.7 580 250 C587.3 251.3 600 253.3 604 254 M566 262 C570 263 583.3 266.7 590 268 C596.7 269.3 603.3 269.7 606 270 M536 256 L560 260 M540 280 L566 286 M519 307 C523.3 306.2 536.7 303.500 545 302 C553.3 300.500 565 298.7 569 298 M575 228 C575.500 231.7 578.2 243 578 250 C577.8 257 573.7 263.3 574 270 C574.3 276.7 579 286.7 580 290 M590 230 L594 260 M556 326 C560 326.7 571.7 329.7 580 330 C588.3 330.3 601.7 328.3 606 328 M556 386 C556.7 388.3 560 395.3 560 400 C560 404.7 556.7 411.7 556 414 M580 372 C580.7 375 581.3 383.3 584 390 C586.7 396.7 594 408.3 596 412 M470 392 C471.7 393.3 475 398 480 400 C485 402 496.7 403.3 500 404 M618 158 C624.2 157.500 645.2 154 655 155 C664.8 156 665.7 161.3 677 164 C688.3 166.7 711.500 169.2 723 171 C734.500 172.8 738.2 174.8 746 175 C753.8 175.2 766 172.500 770 172 M637 185 C642.7 184.2 660.7 180 671 180 C681.3 180 690.8 183 699 185 C707.2 187 716.500 190.8 720 192 M723 155 C725 157.500 733.7 164.8 735 170 C736.3 175.2 733.2 182 731 186 C728.8 190 723.500 192.7 722 194 M723 155 C722.3 157.8 718.8 165.8 719 172 C719.2 178.2 723.2 188.7 724 192 M671 161 C671.500 163.7 672.8 171.8 674 177 C675.2 182.2 677.3 189.500 678 192 M700 146 L702 160 M760 146 C760.7 149.3 764 158.7 764 166 C764 173.3 760.7 186 760 190 M899 147 C902.500 149.3 913.2 156.2 920 161 C926.8 165.8 933.2 171.3 940 176 C946.8 180.7 957.500 186.8 961 189 M864 147 L860 176 M826 176 C832.3 176 855 177 864 176 C873 175 877.3 171 880 170 M800 150 C798.3 152.7 793 161 790 166 C787 171 783.3 177.7 782 180 M920 170 C921.7 172.3 926.7 180 930 184 C933.3 188 938.3 192.3 940 194 M946 150 L948 170 M640 150 C641 153.3 646 163.3 646 170 C646 176.7 641 186.7 640 190 M606 200 L600 230 M600 137 L604 160 M836 178 C838.3 179.7 845.7 185.3 850 188 C854.3 190.7 860 193 862 194 M800 180 L812 190"/>
<path fill="none" stroke="#2e2e26" stroke-width="0.8" d="M416.500 197.500 L516.500 197.500 M430.500 200.500 L430.500 239.500 M482.500 177.500 L482.500 227.500 M441.500 169.500 L462.500 169.500 M441.500 169.500 L441.500 197.500 M516.500 197.500 L516.500 224.500 M404.500 239.500 L462.500 239.500 M400.500 227.500 L400.500 262.500 M520.500 246.500 L606.500 240.500 M273.500 238.500 L277.500 238.500 L277.500 243.500 L273.500 243.500 L273.500 238.500"/>
<path d="M259 246.500 C266.8 246.500 296 247.2 306 246.500 C316 245.8 312.2 243.2 319 242.500 C325.8 241.8 340.8 241.8 347 242.500 C353.2 243.2 350.3 246.500 356 246.500 C361.7 246.500 375.500 246.2 381 242.500 C386.500 238.8 385.8 228.9 389 224 C392.2 219.1 395.500 217 400 213 C404.500 209 409.3 202.3 416 200 C422.7 197.7 433.3 199.2 440 199 C446.7 198.8 452.2 200.8 456 199 C459.8 197.2 459.8 192 463 188 C466.2 184 472 178.500 475 175 C478 171.500 480 168.3 481 167" fill="none" stroke="#2e2e26" stroke-width="3"/><path d="M259 246.500 C266.8 246.500 296 247.2 306 246.500 C316 245.8 312.2 243.2 319 242.500 C325.8 241.8 340.8 241.8 347 242.500 C353.2 243.2 350.3 246.500 356 246.500 C361.7 246.500 375.500 246.2 381 242.500 C386.500 238.8 385.8 228.9 389 224 C392.2 219.1 395.500 217 400 213 C404.500 209 409.3 202.3 416 200 C422.7 197.7 433.3 199.2 440 199 C446.7 198.8 452.2 200.8 456 199 C459.8 197.2 459.8 192 463 188 C466.2 184 472 178.500 475 175 C478 171.500 480 168.3 481 167" fill="none" stroke="#fffdf0" stroke-width="1.400"/>
<path d="M518 326 C524.500 324.500 541.7 319.2 557 317 C572.3 314.8 601.2 313.7 610 313" fill="none" stroke="#2e2e26" stroke-width="3"/><path d="M518 326 C524.500 324.500 541.7 319.2 557 317 C572.3 314.8 601.2 313.7 610 313" fill="none" stroke="#fffdf0" stroke-width="1.400"/>
<path d="M881 138 C882.3 140.3 887.2 147.8 889 152 C890.8 156.2 890.500 158.7 892 163 C893.500 167.3 895.8 173.2 898 178 C900.2 182.8 903.8 189.7 905 192" fill="none" stroke="#2e2e26" stroke-width="3"/><path d="M881 138 C882.3 140.3 887.2 147.8 889 152 C890.8 156.2 890.500 158.7 892 163 C893.500 167.3 895.8 173.2 898 178 C900.2 182.8 903.8 189.7 905 192" fill="none" stroke="#fffdf0" stroke-width="1.400"/>
<path d="M889 161 C888.500 163.500 887 170.8 886 176 C885 181.2 883.500 189.3 883 192" fill="none" stroke="#2e2e26" stroke-width="3"/><path d="M889 161 C888.500 163.500 887 170.8 886 176 C885 181.2 883.500 189.3 883 192" fill="none" stroke="#fffdf0" stroke-width="1.400"/>
<path d="M520 137 L524 145" fill="none" stroke="#2e2e26" stroke-width="3"/><path d="M520 137 L524 145" fill="none" stroke="#fffdf0" stroke-width="1.400"/>
<path d="M55.500 137 V416 M155.500 137 V416 M255.500 137 V416 M355.500 137 V416 M455.500 137 V416 M555.500 137 V416 M655.500 137 V416 M755.500 137 V416 M855.500 137 V416 M955.500 137 V416 M2 227.500 H962 M2 318.500 H962" stroke="#2c2c28" stroke-width="1" fill="none"/>
<path fill="none" stroke="#2a62c4" stroke-width="1" d="M72 149 C70.7 150.500 66.500 155 64 158 C61.500 161 58.3 163 57 167 C55.7 171 56.2 179.500 56 182 M46 181 L56 182 M123 289.500 C127.500 289.500 141.3 289.500 150 289.500 C158.7 289.500 170.8 289.500 175 289.500 M175 288 C177.500 288 185.2 286.7 190 288 C194.8 289.3 200 292.3 204 296 C208 299.7 210.3 305 214 310 C217.7 315 221.7 320.7 226 326 C230.3 331.3 235.7 337 240 342 C244.3 347 248 351 252 356 C256 361 260.3 366.7 264 372 C267.7 377.3 271 382.7 274 388 C277 393.3 280 399.7 282 404 C284 408.3 285.3 412.3 286 414 M481 176 C485.7 174.8 502 172.2 509 169 C516 165.8 520.7 158.6 523 156.500 M526 199 C531.7 197.2 547.7 192 560 188 C572.3 184 593.3 177.2 600 175 M519 233 C525.8 233 546.500 233.500 560 233 C573.500 232.500 593.3 230.500 600 230 M593 180 C594.8 178.7 600.3 174.7 604 172 C607.7 169.3 613.2 165.3 615 164 M600 184 C602 182.7 608.3 178.3 612 176 C615.7 173.7 620.3 171 622 170 M430 366 C431 367.7 433.7 372.3 436 376 C438.3 379.7 442.7 386 444 388"/>
<g fill="#c4d8f4" stroke="#2a62c4" stroke-width=".9"><ellipse cx="110" cy="191" rx="3.500" ry="2.500" transform="rotate(0 110 191)"/><ellipse cx="6" cy="285" rx="4" ry="2.500" transform="rotate(-20 6 285)"/><ellipse cx="162.500" cy="289.500" rx="6" ry="2.500" transform="rotate(0 162.500 289.500)"/><ellipse cx="187.500" cy="285.6" rx="3" ry="2.500" transform="rotate(0 187.500 285.6)"/><ellipse cx="118" cy="396.500" rx="4" ry="3" transform="rotate(0 118 396.500)"/><ellipse cx="113" cy="334" rx="1.8" ry="2.500" transform="rotate(0 113 334)"/><ellipse cx="326.500" cy="215" rx="2" ry="3" transform="rotate(-20 326.500 215)"/><ellipse cx="348.4" cy="216.7" rx="4" ry="3" transform="rotate(20 348.4 216.7)"/><ellipse cx="358" cy="217.500" rx="3" ry="3" transform="rotate(0 358 217.500)"/><ellipse cx="362.500" cy="193" rx="4" ry="2.500" transform="rotate(-20 362.500 193)"/><ellipse cx="382" cy="216.7" rx="3.500" ry="2.500" transform="rotate(0 382 216.7)"/><ellipse cx="322" cy="146" rx="2" ry="3" transform="rotate(0 322 146)"/><ellipse cx="522" cy="233" rx="3" ry="2.500" transform="rotate(0 522 233)"/><ellipse cx="595" cy="230" rx="3" ry="2.500" transform="rotate(0 595 230)"/><ellipse cx="612" cy="171" rx="7" ry="4" transform="rotate(-35 612 171)"/><ellipse cx="448" cy="388" rx="2.500" ry="4" transform="rotate(-20 448 388)"/><ellipse cx="360" cy="147" rx="3" ry="3" transform="rotate(0 360 147)"/></g>
<path d="M3 160 C5.8 165.3 14.8 181.3 20 192 C25.2 202.7 28.8 214.500 34 224 C39.2 233.500 44.500 243 51 249 C57.500 255 67 257.500 73 260 C79 262.500 81 262.8 87 264 C93 265.2 101.7 266.9 109 267.500 C116.3 268.1 123.2 267.2 131 267.500 C138.8 267.8 148.500 268.4 156 269 C163.500 269.6 169.7 269.500 176 271 C182.3 272.500 188 275.2 194 278 C200 280.8 205.7 283.3 212 288 C218.3 292.7 226 300 232 306 C238 312 243 318.3 248 324 C253 329.7 257.3 334 262 340 C266.7 346 271.500 353.2 276 360 C280.500 366.8 285 374.3 289 381 C293 387.7 296.8 394.2 300 400 C303.2 405.8 306.7 413.3 308 416" fill="none" stroke="#333" stroke-width="1"/><path d="M3 160 C5.8 165.3 14.8 181.3 20 192 C25.2 202.7 28.8 214.500 34 224 C39.2 233.500 44.500 243 51 249 C57.500 255 67 257.500 73 260 C79 262.500 81 262.8 87 264 C93 265.2 101.7 266.9 109 267.500 C116.3 268.1 123.2 267.2 131 267.500 C138.8 267.8 148.500 268.4 156 269 C163.500 269.6 169.7 269.500 176 271 C182.3 272.500 188 275.2 194 278 C200 280.8 205.7 283.3 212 288 C218.3 292.7 226 300 232 306 C238 312 243 318.3 248 324 C253 329.7 257.3 334 262 340 C266.7 346 271.500 353.2 276 360 C280.500 366.8 285 374.3 289 381 C293 387.7 296.8 394.2 300 400 C303.2 405.8 306.7 413.3 308 416" fill="none" stroke="#111" stroke-width="3" stroke-dasharray="8 7"/>
<path d="M410 407.500 C414.7 406.4 430.7 402.8 438 401 C445.3 399.2 447.2 397.7 454 396.500 C460.8 395.3 471.3 394.8 479 394 C486.7 393.2 496.500 392.3 500 392" fill="none" stroke="#333" stroke-width="1"/><path d="M410 407.500 C414.7 406.4 430.7 402.8 438 401 C445.3 399.2 447.2 397.7 454 396.500 C460.8 395.3 471.3 394.8 479 394 C486.7 393.2 496.500 392.3 500 392" fill="none" stroke="#111" stroke-width="3" stroke-dasharray="8 7"/>
<path d="M2 239 C5.500 238.8 16 237.2 23 238 C30 238.8 37.500 241.2 44 244 C50.500 246.8 56 251.7 62 255 C68 258.3 77 262.500 80 264" fill="none" stroke="#4a3018" stroke-width="2.800"/>
<path d="M3 323 C5.8 321.4 14.500 317.6 20 313.7 C25.500 309.8 30.8 303.9 36 299.7 C41.2 295.500 46 291.8 51.500 288.7 C57 285.6 64.2 284.1 69 281 C73.8 277.9 77.2 273.2 80 270 C82.8 266.8 83.7 264.4 86 262 C88.3 259.6 89.7 256.8 94 255.500 C98.3 254.2 102.7 254.500 112 254 C121.3 253.500 135.3 253.1 150 252.500 C164.7 251.9 188 251.4 200 250.500 C212 249.6 216.500 248.1 222 247 C227.500 245.9 231.2 244.500 233 244" fill="none" stroke="#4a3018" stroke-width="2.800"/>
<path d="M233 244 C231.9 241.2 227.8 232.500 226.500 227 C225.2 221.500 222.9 217.3 225 211 C227.1 204.7 234.6 196.2 239 189 C243.4 181.8 247.1 173.2 251.500 167.500 C255.9 161.8 262.2 159.9 265.6 155 C269 150.1 270.9 140.8 272 138" fill="none" stroke="#4a3018" stroke-width="2.800"/>
<path d="M236 247 C240.4 249.3 250.8 256.3 262.500 261 C274.2 265.7 290.4 270.500 306 275 C321.6 279.500 343.7 284.2 356 288 C368.3 291.8 371 293.7 380 298 C389 302.3 402.4 310.3 410 313.7 C417.6 317.1 419.1 315.500 425.6 318.4 C432.1 321.3 442.500 327.6 449 331 C455.500 334.4 460 335.4 464.7 338.7 C469.4 342 472.6 347.1 477 351 C481.4 354.9 488.2 358.3 491 362 C493.8 365.7 493.500 371.2 494 373" fill="none" stroke="#4a3018" stroke-width="2.800"/>
<path d="M491 362 C494.2 363.3 505.3 367.3 510 370 C514.7 372.7 517.500 376.7 519 378" fill="none" stroke="#4a3018" stroke-width="2.800"/>
<path d="M80 268 C82 269.1 88.2 271.500 92 274.7 C95.8 277.9 100.2 282.1 103 287 C105.8 291.9 107.2 297.7 109 304 C110.8 310.3 112.3 319.7 114 324.7 C115.7 329.7 116.7 330.4 119 334 C121.3 337.6 125.8 341.500 128 346.500 C130.2 351.500 130.7 357.8 132 363.8 C133.3 369.8 134.3 377.1 136 382.500 C137.7 387.9 141 390.9 142 396.500 C143 402.1 142 412.8 142 416" fill="none" stroke="#4a3018" stroke-width="2.800"/>
<path d="M308 278 C308 281.7 307 292.7 308 300 C309 307.3 311.3 315 314 322 C316.7 329 320.3 335 324 342 C327.7 349 333.2 356.7 336 364 C338.8 371.3 340.2 377.3 341 386 C341.8 394.7 341 411 341 416" fill="none" stroke="#4a3018" stroke-width="2.800"/>
<path d="M598 138 C594.4 141.8 582.4 154.8 576.500 161 C570.6 167.2 566.4 170.500 562.500 175 C558.6 179.500 554.3 184.6 553 188 C551.7 191.4 555.7 192.8 554.7 195.6 C553.7 198.4 549.9 202.1 547 205 C544.1 207.9 540.2 209.3 537.500 213 C534.8 216.7 532.8 221.6 531 227 C529.2 232.4 528.3 238.3 526.500 245.6 C524.7 252.9 521.6 263.2 520 270.6 C518.4 278 517.500 281.3 517 290 C516.500 298.7 517 313.3 517 323 C517 332.7 516.3 339.7 517 348 C517.7 356.3 520.3 368.8 521 373" fill="none" stroke="#4a3018" stroke-width="2.800"/>
<path d="M521 374.7 C525.9 372.9 543.6 366 550.6 363.7 C557.6 361.4 557.8 360.6 563 360.6 C568.2 360.6 575.7 361.9 582 363.7 C588.3 365.500 595.6 369.4 600.6 371.500 C605.6 373.6 610.1 375.2 612 376" fill="none" stroke="#4a3018" stroke-width="2.800"/>
<path d="M513 378 C513.500 380.3 514.2 387.1 516 392 C517.8 396.9 521.7 403.500 524 407.500 C526.3 411.500 529 414.6 530 416" fill="none" stroke="#4a3018" stroke-width="2.800"/>
<path d="M480 167.500 C482.3 167.2 489.2 167.3 494 166 C498.8 164.7 504.7 162.4 509 159.7 C513.3 157 518.2 151.6 520 150" fill="none" stroke="#4a3018" stroke-width="2.800"/>
<path d="M537.500 138 L525 145.6" fill="none" stroke="#4a3018" stroke-width="2.800"/>
<path d="M598 138 C599.3 140.3 602.3 148.2 605.6 152 C608.9 155.8 614.1 157.4 618 161 C621.9 164.6 625.3 168.7 629 173.7 C632.7 178.7 637.500 186.6 640 191 C642.500 195.4 643.3 198.500 644 200" fill="none" stroke="#4a3018" stroke-width="2.800"/>
<path d="M820 138 C819.7 140.3 819.1 147.7 818 152 C816.9 156.3 816.6 159.8 813.6 164 C810.6 168.2 804.1 172.500 800 177 C795.9 181.500 792.3 187.2 789 191 C785.7 194.8 781.500 198.500 780 200" fill="none" stroke="#4a3018" stroke-width="2.800"/>
<path d="M440 418 C445 417.2 460 413.7 470 413 C480 412.3 488.3 413.2 500 414 C511.7 414.8 533.3 417.3 540 418" fill="none" stroke="#4a3018" stroke-width="2.800"/>
<path d="M2 239 C5.500 238.8 16 237.2 23 238 C30 238.8 37.500 241.2 44 244 C50.500 246.8 56 251.7 62 255 C68 258.3 77 262.500 80 264" fill="none" stroke="#fff6e0" stroke-width="1.400"/><path d="M2 239 C5.500 238.8 16 237.2 23 238 C30 238.8 37.500 241.2 44 244 C50.500 246.8 56 251.7 62 255 C68 258.3 77 262.500 80 264" fill="none" stroke="#e05a1c" stroke-width="2" stroke-dasharray="11 5"/>
<path d="M3 323 C5.8 321.4 14.500 317.6 20 313.7 C25.500 309.8 30.8 303.9 36 299.7 C41.2 295.500 46 291.8 51.500 288.7 C57 285.6 64.2 284.1 69 281 C73.8 277.9 77.2 273.2 80 270 C82.8 266.8 83.7 264.4 86 262 C88.3 259.6 89.7 256.8 94 255.500 C98.3 254.2 102.7 254.500 112 254 C121.3 253.500 135.3 253.1 150 252.500 C164.7 251.9 188 251.4 200 250.500 C212 249.6 216.500 248.1 222 247 C227.500 245.9 231.2 244.500 233 244" fill="none" stroke="#fff6e0" stroke-width="1.400"/><path d="M3 323 C5.8 321.4 14.500 317.6 20 313.7 C25.500 309.8 30.8 303.9 36 299.7 C41.2 295.500 46 291.8 51.500 288.7 C57 285.6 64.2 284.1 69 281 C73.8 277.9 77.2 273.2 80 270 C82.8 266.8 83.7 264.4 86 262 C88.3 259.6 89.7 256.8 94 255.500 C98.3 254.2 102.7 254.500 112 254 C121.3 253.500 135.3 253.1 150 252.500 C164.7 251.9 188 251.4 200 250.500 C212 249.6 216.500 248.1 222 247 C227.500 245.9 231.2 244.500 233 244" fill="none" stroke="#e05a1c" stroke-width="2" stroke-dasharray="11 5"/>
<path d="M233 244 C231.9 241.2 227.8 232.500 226.500 227 C225.2 221.500 222.9 217.3 225 211 C227.1 204.7 234.6 196.2 239 189 C243.4 181.8 247.1 173.2 251.500 167.500 C255.9 161.8 262.2 159.9 265.6 155 C269 150.1 270.9 140.8 272 138" fill="none" stroke="#fff6e0" stroke-width="1.400"/><path d="M233 244 C231.9 241.2 227.8 232.500 226.500 227 C225.2 221.500 222.9 217.3 225 211 C227.1 204.7 234.6 196.2 239 189 C243.4 181.8 247.1 173.2 251.500 167.500 C255.9 161.8 262.2 159.9 265.6 155 C269 150.1 270.9 140.8 272 138" fill="none" stroke="#e05a1c" stroke-width="2" stroke-dasharray="11 5"/>
<path d="M236 247 C240.4 249.3 250.8 256.3 262.500 261 C274.2 265.7 290.4 270.500 306 275 C321.6 279.500 343.7 284.2 356 288 C368.3 291.8 371 293.7 380 298 C389 302.3 402.4 310.3 410 313.7 C417.6 317.1 419.1 315.500 425.6 318.4 C432.1 321.3 442.500 327.6 449 331 C455.500 334.4 460 335.4 464.7 338.7 C469.4 342 472.6 347.1 477 351 C481.4 354.9 488.2 358.3 491 362 C493.8 365.7 493.500 371.2 494 373" fill="none" stroke="#fff6e0" stroke-width="1.400"/><path d="M236 247 C240.4 249.3 250.8 256.3 262.500 261 C274.2 265.7 290.4 270.500 306 275 C321.6 279.500 343.7 284.2 356 288 C368.3 291.8 371 293.7 380 298 C389 302.3 402.4 310.3 410 313.7 C417.6 317.1 419.1 315.500 425.6 318.4 C432.1 321.3 442.500 327.6 449 331 C455.500 334.4 460 335.4 464.7 338.7 C469.4 342 472.6 347.1 477 351 C481.4 354.9 488.2 358.3 491 362 C493.8 365.7 493.500 371.2 494 373" fill="none" stroke="#e05a1c" stroke-width="2" stroke-dasharray="11 5"/>
<path d="M491 362 C494.2 363.3 505.3 367.3 510 370 C514.7 372.7 517.500 376.7 519 378" fill="none" stroke="#fff6e0" stroke-width="1.400"/><path d="M491 362 C494.2 363.3 505.3 367.3 510 370 C514.7 372.7 517.500 376.7 519 378" fill="none" stroke="#e05a1c" stroke-width="2" stroke-dasharray="11 5"/>
<path d="M80 268 C82 269.1 88.2 271.500 92 274.7 C95.8 277.9 100.2 282.1 103 287 C105.8 291.9 107.2 297.7 109 304 C110.8 310.3 112.3 319.7 114 324.7 C115.7 329.7 116.7 330.4 119 334 C121.3 337.6 125.8 341.500 128 346.500 C130.2 351.500 130.7 357.8 132 363.8 C133.3 369.8 134.3 377.1 136 382.500 C137.7 387.9 141 390.9 142 396.500 C143 402.1 142 412.8 142 416" fill="none" stroke="#fff6e0" stroke-width="1.400"/><path d="M80 268 C82 269.1 88.2 271.500 92 274.7 C95.8 277.9 100.2 282.1 103 287 C105.8 291.9 107.2 297.7 109 304 C110.8 310.3 112.3 319.7 114 324.7 C115.7 329.7 116.7 330.4 119 334 C121.3 337.6 125.8 341.500 128 346.500 C130.2 351.500 130.7 357.8 132 363.8 C133.3 369.8 134.3 377.1 136 382.500 C137.7 387.9 141 390.9 142 396.500 C143 402.1 142 412.8 142 416" fill="none" stroke="#e05a1c" stroke-width="2" stroke-dasharray="11 5"/>
<path d="M308 278 C308 281.7 307 292.7 308 300 C309 307.3 311.3 315 314 322 C316.7 329 320.3 335 324 342 C327.7 349 333.2 356.7 336 364 C338.8 371.3 340.2 377.3 341 386 C341.8 394.7 341 411 341 416" fill="none" stroke="#fff6e0" stroke-width="1.400"/><path d="M308 278 C308 281.7 307 292.7 308 300 C309 307.3 311.3 315 314 322 C316.7 329 320.3 335 324 342 C327.7 349 333.2 356.7 336 364 C338.8 371.3 340.2 377.3 341 386 C341.8 394.7 341 411 341 416" fill="none" stroke="#e05a1c" stroke-width="2" stroke-dasharray="11 5"/>
<path d="M598 138 C594.4 141.8 582.4 154.8 576.500 161 C570.6 167.2 566.4 170.500 562.500 175 C558.6 179.500 554.3 184.6 553 188 C551.7 191.4 555.7 192.8 554.7 195.6 C553.7 198.4 549.9 202.1 547 205 C544.1 207.9 540.2 209.3 537.500 213 C534.8 216.7 532.8 221.6 531 227 C529.2 232.4 528.3 238.3 526.500 245.6 C524.7 252.9 521.6 263.2 520 270.6 C518.4 278 517.500 281.3 517 290 C516.500 298.7 517 313.3 517 323 C517 332.7 516.3 339.7 517 348 C517.7 356.3 520.3 368.8 521 373" fill="none" stroke="#fff6e0" stroke-width="1.400"/><path d="M598 138 C594.4 141.8 582.4 154.8 576.500 161 C570.6 167.2 566.4 170.500 562.500 175 C558.6 179.500 554.3 184.6 553 188 C551.7 191.4 555.7 192.8 554.7 195.6 C553.7 198.4 549.9 202.1 547 205 C544.1 207.9 540.2 209.3 537.500 213 C534.8 216.7 532.8 221.6 531 227 C529.2 232.4 528.3 238.3 526.500 245.6 C524.7 252.9 521.6 263.2 520 270.6 C518.4 278 517.500 281.3 517 290 C516.500 298.7 517 313.3 517 323 C517 332.7 516.3 339.7 517 348 C517.7 356.3 520.3 368.8 521 373" fill="none" stroke="#e05a1c" stroke-width="2" stroke-dasharray="11 5"/>
<path d="M521 374.7 C525.9 372.9 543.6 366 550.6 363.7 C557.6 361.4 557.8 360.6 563 360.6 C568.2 360.6 575.7 361.9 582 363.7 C588.3 365.500 595.6 369.4 600.6 371.500 C605.6 373.6 610.1 375.2 612 376" fill="none" stroke="#fff6e0" stroke-width="1.400"/><path d="M521 374.7 C525.9 372.9 543.6 366 550.6 363.7 C557.6 361.4 557.8 360.6 563 360.6 C568.2 360.6 575.7 361.9 582 363.7 C588.3 365.500 595.6 369.4 600.6 371.500 C605.6 373.6 610.1 375.2 612 376" fill="none" stroke="#e05a1c" stroke-width="2" stroke-dasharray="11 5"/>
<path d="M513 378 C513.500 380.3 514.2 387.1 516 392 C517.8 396.9 521.7 403.500 524 407.500 C526.3 411.500 529 414.6 530 416" fill="none" stroke="#fff6e0" stroke-width="1.400"/><path d="M513 378 C513.500 380.3 514.2 387.1 516 392 C517.8 396.9 521.7 403.500 524 407.500 C526.3 411.500 529 414.6 530 416" fill="none" stroke="#e05a1c" stroke-width="2" stroke-dasharray="11 5"/>
<path d="M480 167.500 C482.3 167.2 489.2 167.3 494 166 C498.8 164.7 504.7 162.4 509 159.7 C513.3 157 518.2 151.6 520 150" fill="none" stroke="#fff6e0" stroke-width="1.400"/><path d="M480 167.500 C482.3 167.2 489.2 167.3 494 166 C498.8 164.7 504.7 162.4 509 159.7 C513.3 157 518.2 151.6 520 150" fill="none" stroke="#e05a1c" stroke-width="2" stroke-dasharray="11 5"/>
<path d="M537.500 138 L525 145.6" fill="none" stroke="#fff6e0" stroke-width="1.400"/><path d="M537.500 138 L525 145.6" fill="none" stroke="#e05a1c" stroke-width="2" stroke-dasharray="11 5"/>
<path d="M598 138 C599.3 140.3 602.3 148.2 605.6 152 C608.9 155.8 614.1 157.4 618 161 C621.9 164.6 625.3 168.7 629 173.7 C632.7 178.7 637.500 186.6 640 191 C642.500 195.4 643.3 198.500 644 200" fill="none" stroke="#fff6e0" stroke-width="1.400"/><path d="M598 138 C599.3 140.3 602.3 148.2 605.6 152 C608.9 155.8 614.1 157.4 618 161 C621.9 164.6 625.3 168.7 629 173.7 C632.7 178.7 637.500 186.6 640 191 C642.500 195.4 643.3 198.500 644 200" fill="none" stroke="#e05a1c" stroke-width="2" stroke-dasharray="11 5"/>
<path d="M820 138 C819.7 140.3 819.1 147.7 818 152 C816.9 156.3 816.6 159.8 813.6 164 C810.6 168.2 804.1 172.500 800 177 C795.9 181.500 792.3 187.2 789 191 C785.7 194.8 781.500 198.500 780 200" fill="none" stroke="#fff6e0" stroke-width="1.400"/><path d="M820 138 C819.7 140.3 819.1 147.7 818 152 C816.9 156.3 816.6 159.8 813.6 164 C810.6 168.2 804.1 172.500 800 177 C795.9 181.500 792.3 187.2 789 191 C785.7 194.8 781.500 198.500 780 200" fill="none" stroke="#e05a1c" stroke-width="2" stroke-dasharray="11 5"/>
<path d="M440 418 C445 417.2 460 413.7 470 413 C480 412.3 488.3 413.2 500 414 C511.7 414.8 533.3 417.3 540 418" fill="none" stroke="#fff6e0" stroke-width="1.400"/><path d="M440 418 C445 417.2 460 413.7 470 413 C480 412.3 488.3 413.2 500 414 C511.7 414.8 533.3 417.3 540 418" fill="none" stroke="#e05a1c" stroke-width="2" stroke-dasharray="11 5"/>
<path fill="#1a1a1a" d="M87.9 240.3h1.500v1.500h-1.500zM95.3 239.4h3v1.500h-3zM96.6 241.2h1.500v2.500h-1.500zM89.3 241.6h3v2.500h-3zM83.9 246.500h2v1.500h-2zM91.7 244h2v1.500h-2zM91.3 240h2.500v2h-2.500zM91.1 246.6h3v2h-3zM84.500 246.6h2v2h-2zM84.500 248.7h3v1.500h-3zM92.3 245.4h3v2.500h-3zM94.7 245h2.500v2h-2.500zM87.500 249.9h2v1.500h-2zM91.6 245.9h2v2.500h-2zM87.3 252.7h1.500v2.500h-1.500zM85.500 243.1h2.500v2.500h-2.500zM83.6 248h3v2h-3zM88.1 243.3h2.500v2.500h-2.500zM84 239.4h2v2.500h-2zM93.500 239h2v2.500h-2zM87.3 243.8h2v1.500h-2zM97.1 243.3h3v1.500h-3zM90.4 241.3h2v2h-2zM94.1 244h2.500v1.500h-2.500zM85.500 244h2v2h-2zM70.2 279.6h2v2.500h-2zM75.6 275.1h2.500v2h-2.500zM48.8 262.4h2v2h-2zM44.4 278.8h2v2h-2zM53 261.6h3v2h-3zM63.500 266h2v1.500h-2zM58.6 279.8h3v2.500h-3zM56.7 267.9h2.500v2.500h-2.500zM46 259.7h2v2.500h-2zM49.2 266.500h1.500v1.500h-1.500zM44 261.8h1.500v2h-1.500zM63.6 259.8h2v2.500h-2zM48.8 264.3h2v2h-2zM59.2 260.9h2.500v2.500h-2.500zM59.4 265.8h2v1.500h-2zM68 276.500h2.500v2h-2.500zM60.500 263.1h3v2h-3zM48.7 271.6h1.500v2h-1.500zM75.3 279.6h2v2h-2zM73.1 266.9h2v2h-2zM64.4 273.3h2v2h-2zM70.2 276.500h2v2h-2zM60.6 266.9h1.500v1.500h-1.500zM69.3 269.8h2v2h-2zM58.3 281.4h2v2h-2zM46.6 260.6h2.500v2h-2.500zM54.8 270.1h3v1.500h-3zM59.3 274.3h1.500v1.500h-1.500zM73.1 277.6h2v2.500h-2zM72.4 268.8h2v1.500h-2zM69.6 282.3h2.500v2.500h-2.500zM56.8 281.7h2v2h-2zM75.8 258.7h3v2.500h-3zM69.8 261.7h3v2.500h-3zM65 266.8h3v2h-3zM44.7 278h1.500v2h-1.500zM57.9 279.8h2v1.500h-2zM52.1 265.3h2v2h-2zM52.3 268.500h2v1.500h-2zM73.1 266.8h2.500v2.500h-2.500zM70.500 280h2v2h-2zM60.8 258.500h2.500v2h-2.500zM63.500 277.4h2v2h-2zM48.500 273.500h1.500v1.500h-1.500zM54.4 271h3v2.500h-3zM69.1 260.7h3v1.500h-3zM52 264.9h1.500v2.500h-1.500zM62 277h1.500v2.500h-1.500zM54.4 282.3h3v2h-3zM66.2 269.3h3v2.500h-3zM60.2 264.2h3v2h-3zM73.500 280.3h2v2.500h-2zM48.4 261h2.500v2h-2.500zM46.3 264h1.500v2h-1.500zM65.4 277.6h2v2h-2zM48.6 280.1h2.500v2h-2.500zM67.9 260.4h2.500v2h-2.500zM75.7 278.8h2v2.500h-2zM75.8 268.1h2.500v2h-2.500zM55.4 260.3h2v1.500h-2zM54.8 269.500h1.500v2.500h-1.500zM54.6 273.6h3v1.500h-3zM47.6 281h2v1.500h-2zM46.7 264.8h2v2h-2zM68.2 278.500h2v2.500h-2zM48.8 281h3v2.500h-3zM66.4 260.2h1.500v2h-1.500zM57.6 259.8h1.500v1.500h-1.500zM69.7 260.1h2v1.500h-2zM52.500 261h1.500v2h-1.500zM75.8 268.4h2v2h-2zM45.4 275.7h1.500v2h-1.500zM52.4 262.500h2v2h-2zM61 263.1h2.500v2h-2.500zM52.7 278.1h2v1.500h-2zM44.500 276.3h3v2h-3zM60.500 264.1h2.500v1.500h-2.500zM65.1 274.3h2.500v2.500h-2.500zM75 265.7h2v2h-2zM55 278.8h2v2.500h-2zM75.7 282.500h2v1.500h-2zM46.3 276.500h2v2.500h-2zM49.2 260.1h2.500v2h-2.500zM63.2 275.3h1.500v2.500h-1.500zM49.9 264.7h1.500v2h-1.500zM55.7 266.2h3v2h-3zM13.9 235.8h2v2h-2zM16.1 230h2.500v1.500h-2.500zM18.500 233h2v2h-2zM19.1 230h2v1.500h-2zM11.9 233.500h2.500v1.500h-2.500zM15 233.8h1.500v2h-1.500zM22.2 234.3h3v2.500h-3zM24.3 234.3h2.500v2h-2.500zM14.7 233.7h2v1.500h-2zM58.2 245.6h3v2.500h-3zM55.2 248.1h2v1.500h-2zM58.3 242.2h2v1.500h-2zM32 230.500h2v1.500h-2zM43.4 238.7h1.500v1.500h-1.500zM51.7 244.7h2.500v2h-2.500zM31.1 247.7h3v1.500h-3zM52.8 228.7h2.500v2h-2.500zM57.7 249h2v2h-2zM38.6 243.9h2.500v2.500h-2.500zM58.9 229h2v1.500h-2zM51.4 243.7h1.500v2h-1.500zM41.9 243.9h2v2h-2zM31.4 228.6h2v1.500h-2zM53.8 244.6h2v2h-2zM46.3 239.1h1.500v2h-1.500zM41.3 229.2h2.500v1.500h-2.500zM40.6 229h3v2.500h-3zM63.8 237.1h2v1.500h-2zM50.2 230.7h3v2h-3zM62.4 230.4h3v2h-3zM60.3 245.3h2v2.500h-2zM60.6 239.6h1.500v2h-1.500zM31.1 239.8h2.500v2.500h-2.500zM41 230.7h2v2.500h-2zM41.4 248.8h1.500v2h-1.500zM55.8 248.8h1.500v2h-1.500zM54.500 250.4h2v2h-2zM43.3 237.2h3v1.500h-3zM42.9 238.1h2v1.500h-2zM40.3 228.3h2v2h-2zM39.2 233.9h3v2h-3zM100.6 253h2.500v1.500h-2.500zM122.4 255h3v2h-3zM119.2 250.4h2.500v2.500h-2.500zM115.500 251.1h2v2.500h-2zM95.7 257.4h2v2h-2zM110.500 252.7h2v2h-2zM119.9 257.8h2v2.500h-2zM117 252.4h3v2.500h-3zM98.2 255.1h1.500v2h-1.500zM111.500 256.500h3v2h-3zM109.9 252.7h2.500v2.500h-2.500zM98.9 251.500h1.500v2h-1.500zM46.2 284.4h2v2h-2zM44.7 286.3h1.500v2.500h-1.500zM46.9 287h2v2.500h-2zM44.9 287h2.500v2h-2.500zM237.8 244h3v2h-3zM222.9 251.6h2.500v2.500h-2.500zM240 245h2v1.500h-2zM223.9 245h2.500v2.500h-2.500zM220 244.500h3v2.500h-3zM250.1 242.500h1.500v2h-1.500zM224.8 246.3h1.500v2.500h-1.500zM222.6 249.9h1.500v2h-1.500zM227.2 251.9h2v2h-2zM239.4 246.4h2.500v1.500h-2.500zM223.1 243.2h3v2h-3zM232 242.1h3v1.500h-3zM220.3 243.2h2.500v2h-2.500zM249.7 248h2v2.500h-2zM236.3 246.7h1.500v2.500h-1.500zM241.8 243.3h1.500v2h-1.500zM235.4 248.4h2.500v1.500h-2.500zM228 248.3h2v2h-2zM235.3 248.7h2.500v2h-2.500zM241.2 241.8h2v1.500h-2zM226.4 252.6h2v2h-2zM227.2 242.1h2v1.500h-2zM249.500 245.9h2v2h-2zM235 251.7h1.500v2h-1.500zM248.6 239.8h1.500v2h-1.500zM232.9 248.9h2v2.500h-2zM233.9 249h2v1.500h-2zM250.9 252h2v2h-2zM225.8 252.1h2.500v1.500h-2.500zM229.7 249.2h2v2h-2zM233.7 240.500h1.500v2h-1.500zM222.500 244.9h1.500v2h-1.500zM231.8 249.8h2v2.500h-2zM222.7 248.9h2v2h-2zM236.8 245.2h2v2h-2zM242.9 245.6h2.500v2h-2.500zM245.2 249.7h1.500v2.500h-1.500zM221.1 239.9h1.500v2h-1.500zM226 239.9h3v2h-3zM231.3 243.7h3v1.500h-3zM228.1 249h2v2h-2zM229.2 249.1h3v1.500h-3zM220.8 242.3h2.500v2.500h-2.500zM249.6 244.4h2v2.500h-2zM245.3 240.9h2.500v2h-2.500zM220.3 252h2v2h-2zM238.8 243.6h2v2.500h-2zM231.2 250h1.500v2h-1.500zM232.1 241.2h2.500v1.500h-2.500zM240.1 245.7h3v2h-3zM225 245h1.500v1.500h-1.500zM228.2 240.2h1.500v2.500h-1.500zM235.500 248.9h2.500v2h-2.500zM227.3 244.8h3v2h-3zM243.2 250.9h1.500v2h-1.500zM229.1 246.9h2v2h-2zM242.9 241.8h2v2h-2zM227.6 241.1h3v2h-3zM224.1 260.1h2v2h-2zM233.2 256.3h2.500v1.500h-2.500zM217.9 261.2h2v2.500h-2zM240.6 255.500h2v2h-2zM218.3 257.500h3v2h-3zM241 259.8h2v2.500h-2zM231.9 265.1h1.500v1.500h-1.500zM232.8 264.2h2v2h-2zM216 259.4h1.500v2h-1.500zM243 255.500h2v1.500h-2zM282.2 250.500h2v2h-2zM275.9 248.500h1.500v2.500h-1.500zM273.500 248.4h1.500v2.500h-1.500zM277.2 248.9h3v1.500h-3zM266.8 138.8h2v2.500h-2zM280.500 139.3h2.500v1.500h-2.500zM252.8 139.1h2v2.500h-2zM257.1 139.7h2v2h-2zM256 138.8h1.500v2.500h-1.500zM277 138.8h1.500v2.500h-1.500zM263.7 138.7h2v2h-2zM240.6 139.1h2.500v1.500h-2.500zM263.500 139.9h3v2h-3zM246 138.6h3v2h-3zM277.9 138.2h2.500v2h-2.500zM252.4 139.7h1.500v2.500h-1.500zM252.9 139.2h2.500v1.500h-2.500zM277.1 139.2h2v2h-2zM265.500 139.2h2v2.500h-2zM491.1 160.2h2.500v2h-2.500zM496.7 159.2h2v2h-2zM487.2 163.6h1.500v2h-1.500zM489.3 164h3v2h-3zM504.2 161.1h2v2.500h-2zM496.9 161.7h3v2.500h-3zM491 158h2.500v2.500h-2.500zM492.6 165.6h2.500v2h-2.500zM508.7 162h1.500v2h-1.500zM496 161.7h2.500v1.500h-2.500zM487.1 159.3h2v1.500h-2zM487.500 163h2.500v2h-2.500zM486.7 158.7h3v1.500h-3zM491.4 167.8h2.500v2h-2.500zM512.8 167.2h2v2h-2zM487.8 161.500h2v2h-2zM495.1 164.1h2.500v2h-2.500zM493.1 167.6h2.500v2h-2.500zM502.6 164.2h2v2h-2zM496.4 160h2.500v2h-2.500zM485.1 346.7h2v2.500h-2zM471.1 368h1.500v1.500h-1.500zM485.1 350.1h2.500v1.500h-2.500zM473.6 357.500h2.500v2h-2.500zM473.9 376.6h3v2h-3zM476.8 367.1h2.500v2h-2.500zM471.3 366.2h1.500v2h-1.500zM490.6 345.7h3v2h-3zM488 366.4h2v2h-2zM474.7 361.3h2.500v2h-2.500zM492.9 340.500h2v1.500h-2zM466.7 335.1h2v2h-2zM469.2 350h2v2.500h-2zM483.500 359.7h2v2h-2zM484.7 354.9h2v1.500h-2zM494.1 345.2h2v2.500h-2zM468.9 361.8h2v2.500h-2zM490.3 375.6h1.500v2h-1.500zM483.8 359.3h3v2.500h-3zM473.500 372.9h1.500v1.500h-1.500zM481.9 352.1h2v2h-2zM467.8 367.7h1.500v2h-1.500zM470.3 343.4h3v2.500h-3zM490.4 342.3h2v1.500h-2zM475 337h2.500v1.500h-2.500zM477.3 353.3h2.500v1.500h-2.500zM488.3 354h2v1.500h-2zM473.8 362h1.500v2h-1.500zM492.7 373.9h2v1.500h-2zM474 358.3h2.500v2h-2.500zM474.9 374h2v1.500h-2zM492.4 335.6h2v2h-2zM491.3 343.500h2v2h-2zM471.8 351.3h3v2h-3zM477.4 370.8h3v2.500h-3zM480.2 357.3h1.500v1.500h-1.500zM479.1 365.4h3v2h-3zM489.7 351.4h3v1.500h-3zM483 342.2h1.500v1.500h-1.500zM469.4 361.1h2v2h-2zM495.3 364.4h1.500v1.500h-1.500zM470.2 362h1.500v1.500h-1.500zM488.1 337.8h3v2h-3zM472 375.1h3v1.500h-3zM492.4 366.7h2.500v1.500h-2.500zM473.4 343.500h1.500v1.500h-1.500zM494.500 373.3h1.500v2h-1.500zM480.3 340.6h2v2h-2zM475.6 352.8h1.500v2h-1.500zM473.7 346.9h2v2h-2zM489.1 360.3h2.500v2h-2.500zM484.500 336.3h2.500v1.500h-2.500zM479.1 367.500h2v2.500h-2zM487.1 357.6h2v1.500h-2zM483.2 347.1h2.500v1.500h-2.500zM481.7 347.1h1.500v1.500h-1.500zM476.4 339h2v2.500h-2zM483.8 375.2h3v2h-3zM483.3 341.7h2v2h-2zM480.9 339.6h1.500v2.500h-1.500zM489.6 364.3h1.500v2h-1.500zM476.7 351.9h2.500v1.500h-2.500zM478.7 362.1h2v2h-2zM475.1 353h3v2h-3zM477.4 372.1h2v2.500h-2zM469.8 360h3v1.500h-3zM476.500 348.7h2v2.500h-2zM485.9 366.2h2v2.500h-2zM479.2 367.500h3v2h-3zM469.8 354.4h2v2h-2zM474 366.7h3v2h-3zM487.7 375.9h2v2h-2zM470.8 348.8h2v2h-2zM495.3 365.6h1.500v2h-1.500zM494.9 339.3h2.500v2h-2.500zM495.500 368.4h2v2.500h-2zM474.2 339.6h1.500v2h-1.500zM472.2 351.3h1.500v1.500h-1.500zM478 368.2h2v2h-2zM479.9 341h3v2.500h-3zM466.2 345.2h2.500v2.500h-2.500zM491.4 363.1h3v2h-3zM486.4 361.9h2.500v2.500h-2.500zM475.4 361.4h1.500v2.500h-1.500zM473.3 351.8h2v2h-2zM491.500 355.3h1.500v2.500h-1.500zM481.500 362.8h2v2h-2zM489.3 351.3h2.500v1.500h-2.500zM467.1 357.8h2v2h-2zM481.6 339.2h3v2.500h-3zM482.2 365.1h3v1.500h-3zM485.2 369.8h3v2h-3zM478.3 374.8h2v2h-2zM477.8 367h1.500v2h-1.500zM485.1 345.6h2.500v2.500h-2.500zM467.8 338.2h2.500v2h-2.500zM483.4 339.6h2v2.500h-2zM494.2 357.1h2v2.500h-2zM479.9 341.9h1.500v2h-1.500zM480.1 358.6h2v2h-2zM476.6 361.8h2.500v2.500h-2.500zM495.9 366.9h2v2.500h-2zM476.6 370.7h2v2.500h-2zM486.6 376.3h2v2.500h-2zM466.1 365.3h2v2h-2zM473.3 347.7h2.500v2.500h-2.500zM478.9 361.8h2v2h-2zM493.9 370.9h1.500v1.500h-1.500zM490.8 373h2v2h-2zM485 335.6h1.500v2h-1.500zM494.6 362.6h2v1.500h-2zM483.4 370.9h2v2.500h-2zM476.4 341.4h2.500v2h-2.500zM484.3 363.9h1.500v2h-1.500zM471.9 364.1h3v1.500h-3zM488.3 353.4h1.500v1.500h-1.500zM473.9 344.8h2v2.500h-2zM480.8 337.500h2.500v2h-2.500zM487 345.4h2v1.500h-2zM470.8 348.500h3v2.500h-3zM486 370.3h2v2.500h-2zM478.6 375.3h1.500v2h-1.500zM485.1 361.7h1.500v1.500h-1.500zM484.3 363.7h2v1.500h-2zM481.3 355.4h2v1.500h-2zM472.4 352.500h2v2h-2zM468.8 362.7h2v2.500h-2zM489.4 358.3h2v2h-2zM479.1 352.7h3v1.500h-3zM490.8 347.3h2.500v2.500h-2.500zM476 376.3h3v2h-3zM495.2 362.500h1.500v2h-1.500zM501.500 378.4h2v1.500h-2zM524.6 358.2h3v2.500h-3zM515.3 358.500h2v1.500h-2zM494.2 362.7h2.500v1.500h-2.500zM524.8 384.3h3v2.500h-3zM518.1 375.8h3v1.500h-3zM502.3 377h2.500v2h-2.500zM498 362.4h1.500v2.500h-1.500zM524.2 384.4h1.500v2h-1.500zM528 361.2h2v2h-2zM527.6 362.500h1.500v2h-1.500zM494.8 374h3v1.500h-3zM513.4 372.7h1.500v2.500h-1.500zM516.4 384.6h2.500v1.500h-2.500zM494.6 368.6h3v2h-3zM512.500 369.4h1.500v1.500h-1.500zM519.1 363.4h2v1.500h-2zM510.7 357.3h1.500v1.500h-1.500zM502.500 360.6h2.500v1.500h-2.500zM504.7 374.1h2.500v2h-2.500zM530 368h2v1.500h-2zM505.4 373.7h2.500v2.500h-2.500zM520.1 383.7h1.500v1.500h-1.500zM494.4 357.4h3v1.500h-3zM509.2 366.4h3v2h-3zM531.4 382h3v1.500h-3zM506.3 385.500h2.500v2.500h-2.500zM520.4 361.3h1.500v2h-1.500zM531.2 361.9h2.500v2.500h-2.500zM509 380.6h2v2h-2zM505.4 358.8h3v2h-3zM527.9 378.8h1.500v2h-1.500zM517.4 366.3h2.500v2h-2.500zM508.7 377.500h3v2h-3zM525.500 365.500h1.500v2h-1.500zM504.3 369.7h3v1.500h-3zM505.3 361.2h3v2h-3zM504.7 382.500h3v2.500h-3zM507.500 359.6h3v2.500h-3zM525.1 363h2v2h-2zM517.7 377.3h2.500v2h-2.500zM530.1 374.6h1.500v2.500h-1.500zM511.9 359.6h2v1.500h-2zM503.1 374.4h2v2h-2zM512.6 374.7h2v2h-2zM501.500 362.4h2v2h-2zM516.500 367.8h3v2h-3zM503.6 384.7h2.500v2h-2.500zM527.8 368.2h2.500v1.500h-2.500zM500.1 374.9h2v2h-2zM514.3 357.6h1.500v2h-1.500zM532.6 383h2.500v2h-2.500zM504.2 380.4h2.500v1.500h-2.500zM530.9 380h3v2h-3zM503.9 358.1h2v2h-2zM508.7 357.8h1.500v2h-1.500zM528 370.7h1.500v2.500h-1.500zM530 378.2h1.500v2h-1.500zM506.4 364h1.500v2.500h-1.500zM501.1 382.500h2v2h-2zM532.7 363.7h1.500v2h-1.500zM530.7 358.8h3v1.500h-3zM526.7 358.4h3v2.500h-3zM496.2 361.3h1.500v2h-1.500zM520.4 366h3v2.500h-3zM523.6 360.2h2v2h-2zM504 360.7h2.500v2.500h-2.500zM500.6 364.2h2v1.500h-2zM512.2 384.4h1.500v2h-1.500zM530.2 363.6h3v2h-3zM528.7 361.2h2.500v1.500h-2.500zM530.1 368.6h1.500v1.500h-1.500zM511.6 367.2h2v2.500h-2zM498.500 368h2v2h-2zM522.7 362.4h2.500v2h-2.500zM511.1 361.500h2.500v2.500h-2.500zM503.6 357.8h3v2h-3zM507 362h2.500v1.500h-2.500zM506.4 384.1h1.500v2h-1.500zM532.2 358.7h2v2.500h-2zM526.6 360.6h2v2h-2zM510.9 364.8h2v2h-2zM497.8 365.7h2v1.500h-2zM526.500 386.4h2v1.500h-2zM511.2 372.2h3v2h-3zM511.3 380.7h3v2h-3zM501.2 370.1h2.500v2h-2.500zM504.8 362.4h2v2h-2zM521.8 362.9h1.500v1.500h-1.500zM528.7 378.9h2v2h-2zM502 375.4h2v2h-2zM501.9 359h3v2.500h-3zM526.8 384.500h3v2h-3zM507.1 382.3h2.500v1.500h-2.500zM494.6 384.3h2.500v2h-2.500zM528 365h2v2h-2zM495.4 378.1h3v1.500h-3zM507.9 385h3v1.500h-3zM498.7 378.4h2v2.500h-2zM516.500 383.9h2v1.500h-2zM531.2 371.8h3v1.500h-3zM514.7 373.1h1.500v2h-1.500zM531.7 363.7h2v2h-2zM498 364.500h1.500v1.500h-1.500zM497.8 378h2v2h-2zM494.7 375h3v2.500h-3zM514.4 378.1h1.500v2h-1.500zM527.9 378.500h1.500v2h-1.500zM498.8 371.8h3v2h-3zM498.3 360.6h2v2h-2zM527.6 361.4h3v2.500h-3zM523.1 361.9h1.500v2.500h-1.500zM521.1 374.9h3v1.500h-3zM509.4 385.2h2v2h-2zM509.6 382.2h2.500v2h-2.500zM525.8 382.4h1.500v2h-1.500zM514.2 385.7h2v2h-2zM527.9 376.9h1.500v2h-1.500zM498.3 362.6h2v2.500h-2zM501.8 377.1h2v2h-2zM510.4 368.9h2.500v1.500h-2.500zM525.6 383.500h1.500v1.500h-1.500zM527.8 375.6h3v2h-3zM518.500 381.2h1.500v1.500h-1.500zM503.8 372.6h2.500v2h-2.500zM531.1 365.6h2v2h-2zM519.3 360.6h3v2h-3zM497.3 374.7h2v2.500h-2zM498.8 360.9h2v2.500h-2zM516.500 365.2h1.500v2h-1.500zM526.8 375.3h3v2h-3zM535.4 337.8h2v2.500h-2zM544.8 339.3h2.500v2.500h-2.500zM541.9 335.4h2v2h-2zM517.4 342.6h3v2.500h-3zM510.500 339.9h2v2h-2zM531.7 341.9h2v2h-2zM521.500 345.8h2v1.500h-2zM533.6 339.9h1.500v2.500h-1.500zM542.500 340h1.500v2h-1.500zM548.6 344.500h2v2.500h-2zM523.1 339.9h2v2h-2zM542 342.2h2.500v2h-2.500zM540.6 344.9h2v2.500h-2zM544 335.1h3v1.500h-3zM529.4 348.500h3v2h-3zM526.3 346h3v1.500h-3zM524.8 341.3h2.500v2h-2.500zM538.2 339.1h2.500v2.500h-2.500zM535.3 335.1h2.500v2.500h-2.500zM527.3 337.6h2v2h-2zM527 340.3h2v1.500h-2zM542 339.6h3v2h-3zM547.4 337.9h2.500v1.500h-2.500zM511 338.6h2.500v2h-2.500zM545.9 345.8h3v2.500h-3zM530.2 342.2h2.500v2.500h-2.500zM528.1 335.6h2v2.500h-2zM547 344.500h3v2h-3zM513.9 340.2h2.500v2h-2.500zM544.3 348.500h2.500v2.500h-2.500zM527.2 343.7h3v2h-3zM537 345.500h1.500v2h-1.500zM524.1 340.1h1.500v2h-1.500zM530 336.500h2v2h-2zM542 348.9h2.500v2h-2.500zM530.4 346.4h2v2h-2zM526.1 335.8h3v1.500h-3zM523.8 348.9h1.500v2.500h-1.500zM510.4 335h3v1.500h-3zM545.8 340.6h1.500v1.500h-1.500zM536.1 337.8h2.500v2h-2.500zM544 347.500h3v2h-3zM532.4 340.8h1.500v2h-1.500zM516.1 345.6h1.500v1.500h-1.500zM513.9 337.4h3v2.500h-3zM542.1 343.6h1.500v1.500h-1.500zM536.7 343.1h2v2h-2zM523.8 337.4h2v1.500h-2zM543.500 348.3h1.500v2h-1.500zM517.500 343.7h1.500v1.500h-1.500zM518.6 340.500h1.500v2.500h-1.500zM531.8 349.1h2v1.500h-2zM537.3 355h2v2h-2zM529.3 359.7h2.500v2h-2.500zM550.8 349.3h2.500v1.500h-2.500zM541.6 351.6h3v2h-3zM550.500 351.8h2.500v1.500h-2.500zM570.2 349.1h2v2h-2zM547.6 348.2h2v2.500h-2zM558.2 347h3v2.500h-3zM546.500 356.1h1.500v2.500h-1.500zM571.9 351h2v2.500h-2zM538.9 349.8h2v2.500h-2zM530.8 356.3h2v2h-2zM541.6 347.2h2v2h-2zM557.3 358.4h3v2.500h-3zM553.3 358.500h2v2h-2zM548.1 348.7h2.500v2.500h-2.500zM561.7 354.9h2v2.500h-2zM555.3 348.9h2.500v2h-2.500zM578 362h3v2.500h-3zM559.6 351.3h2v2.500h-2zM560.6 348.6h1.500v1.500h-1.500zM557.2 349.6h2.500v1.500h-2.500zM563.2 354.7h2v1.500h-2zM549.3 346.500h2v2h-2zM545.7 356.3h1.500v1.500h-1.500zM558.2 351.1h3v2h-3zM539 357.2h1.500v2h-1.500zM544 358.9h2.500v2h-2.500zM547.500 359.4h2.500v2h-2.500zM577.7 348h2v2h-2zM575.6 345.4h2.500v2h-2.500zM581 351.8h1.500v2h-1.500zM544.2 349.6h3v2h-3zM566.1 345.7h1.500v2h-1.500zM551.4 357.9h2v2.500h-2zM567.4 354.4h2v2h-2zM558.6 357.2h2v2.500h-2zM563.8 354.8h1.500v1.500h-1.500zM572.4 358.2h2v1.500h-2zM574.500 354.9h1.500v2h-1.500zM564.4 345.6h2v2h-2zM569.4 350.9h1.500v2.500h-1.500zM565.1 351.7h3v2h-3zM543.6 346.500h2.500v2.500h-2.500zM577.4 356.8h2.500v1.500h-2.500zM564.2 348.500h3v2h-3zM554.500 348.2h3v2h-3zM538.1 347.8h2v2h-2zM542 346h2v2h-2zM550.4 348.4h2v2h-2zM536.1 357h2.500v2h-2.500zM565.7 345.1h2.500v2h-2.500zM577.7 351h2v2h-2zM575 347.4h3v2h-3zM546.3 358.9h3v2.500h-3zM568.500 347.9h2v2.500h-2zM572.7 351.9h2v1.500h-2zM564.9 345.2h2.500v2h-2.500zM531.3 360.2h2v2h-2zM534.8 350.3h1.500v2h-1.500zM545.9 353h2v2h-2zM537.7 346.2h1.500v2.500h-1.500zM580.6 357.8h1.500v2h-1.500zM580 354.6h1.500v2.500h-1.500zM578.8 353.3h3v2h-3zM529.4 360.6h2v2h-2zM563 346.3h1.500v1.500h-1.500zM569.3 359.3h2v2h-2zM538.7 355.8h2v1.500h-2zM569.8 359.1h3v2h-3zM548.7 356h2v2h-2zM541 347.3h2v2h-2zM541.4 345.7h3v2.500h-3zM576.1 361.1h2.500v2.500h-2.500zM555 347.7h2v1.500h-2zM536.4 348.9h2v2.500h-2zM562.1 351.8h1.500v2.500h-1.500zM553.9 348.7h2v1.500h-2zM530.7 355.4h3v2.500h-3zM536.4 346.2h1.500v2.500h-1.500zM575.3 346.1h1.500v2h-1.500zM576 347.8h2v1.500h-2zM552 354.6h2v2h-2zM553.4 354.2h3v2.500h-3zM551.3 354.1h2v2.500h-2zM579 355.500h1.500v2h-1.500zM560.7 350h3v2.500h-3zM578.500 353.2h2v2h-2zM574 354h1.500v2h-1.500zM540.6 357.6h1.500v2h-1.500zM563.3 351.3h3v2.500h-3zM547.7 349.1h2.500v2.500h-2.500zM542.6 348.9h2v1.500h-2zM540.500 359.2h1.500v2h-1.500zM556.6 349.3h2.500v2h-2.500zM509 394h3v1.500h-3zM513.9 400.2h3v1.500h-3zM517 398.1h2.500v2h-2.500zM517.3 397h1.500v1.500h-1.500zM506.4 398.2h3v2h-3zM520.1 393.7h2.500v1.500h-2.500zM497.7 399h1.500v2.500h-1.500zM500.4 395.4h1.500v2h-1.500zM506.4 393.1h2v2.500h-2zM518.500 392.8h2v1.500h-2zM518.8 399.8h2v2h-2zM514.1 395.1h1.500v2h-1.500zM497.3 395.4h3v2h-3zM513.500 392.4h3v2h-3zM496.7 396.9h3v1.500h-3zM494.9 400.2h2v2h-2zM503.6 398.2h1.500v2.500h-1.500zM497.1 392.2h1.500v1.500h-1.500zM515.6 393.7h3v2h-3zM517.6 398h2v2h-2zM508.500 398.2h2v2.500h-2zM494.4 395.1h2v2.500h-2zM507.500 399.9h1.500v1.500h-1.500zM498.9 399.4h3v2.500h-3zM474.500 397.9h2.500v2.500h-2.500zM461 397.8h3v1.500h-3zM463.9 396.1h2v2h-2zM469 394.2h2v2h-2zM472 395.3h2.500v2.500h-2.500zM476.6 395.3h2v2.500h-2zM463.3 394.1h2.500v1.500h-2.500zM469.9 396.9h2v2h-2zM510.8 379h2v2h-2zM515.9 385.9h2v1.500h-2zM525.6 391.500h1.500v2h-1.500zM521.7 387.500h1.500v2h-1.500zM522.2 389.9h2v2h-2zM519.1 382.6h2v2h-2zM514.2 387.500h2v2.500h-2zM509.4 388.6h2v2.500h-2zM514.1 391.4h2v2h-2zM504.2 381.1h2.500v2.500h-2.500zM512.500 386.500h2v2h-2zM516.4 380.2h2v2h-2zM520.3 386.3h2v1.500h-2zM525.8 386.8h1.500v2h-1.500zM508.500 383.3h2.500v2h-2.500zM527.2 388.4h1.500v2.500h-1.500zM508.9 380.6h2v1.500h-2zM521.2 387.4h2v1.500h-2zM506.1 384h2v2h-2zM524.2 387.7h2v2h-2zM520.500 392.4h3v1.500h-3zM502.2 390.1h3v2h-3zM690.8 413.500h2v1.500h-2zM615 414h2v2h-2zM315 413.9h2.500v2.500h-2.500zM586.2 413.9h2v1.500h-2zM829 413.9h1.500v2h-1.500zM745.4 414h2.500v2h-2.500zM902.7 413.9h1.500v2h-1.500zM542.4 414h1.500v2.500h-1.500zM590.2 413.9h2v2h-2zM91.500 413.6h2v1.500h-2zM344.8 413.7h2v2h-2zM631.8 413.8h2v2h-2zM712 413.6h2.500v1.500h-2.500zM745.4 413.7h3v2.500h-3zM537.8 413.7h3v2h-3zM128.3 413.500h2.500v1.500h-2.500zM629.8 413.9h2v2h-2zM950 413.6h1.500v1.500h-1.500zM600.4 413.6h3v2h-3zM533.9 413.6h3v2h-3zM708.6 414h2v1.500h-2zM338.1 413.9h2.500v2.500h-2.500zM206.2 414h2.500v2.500h-2.500zM205.2 413.9h1.500v1.500h-1.500zM634.3 413.500h2.500v2h-2.500zM59.500 413.8h2.500v2.500h-2.500zM907.3 413.8h2v1.500h-2zM243.3 413.6h2.500v2h-2.500zM223.7 413.6h2.500v2h-2.500zM287.9 414h2v2h-2zM459.3 414h2v2h-2zM790.3 413.6h2v1.500h-2zM467.2 413.9h2v2h-2zM656.1 413.8h2.500v2h-2.500zM556.9 413.9h2v2h-2zM46.2 413.9h2.500v2h-2.500zM418.500 413.6h2v1.500h-2zM773.2 413.6h1.500v2h-1.500zM875.3 413.6h2v1.500h-2zM721.7 413.7h2.500v1.500h-2.500zM398.8 413.8h2.500v2h-2.500zM940.500 413.500h2v2h-2zM760.8 413.8h1.500v2h-1.500zM485.6 413.6h2.500v1.500h-2.500zM699.9 413.500h2v1.500h-2zM843.7 413.6h2.500v2h-2.500zM505.3 413.500h2v2h-2zM608.6 413.8h1.500v2h-1.500zM806.3 414h1.500v2h-1.500zM931.7 413.9h2v1.500h-2zM263.500 413.6h2v2h-2zM68 413.500h3v1.500h-3zM393 413.8h2v2h-2zM12.1 413.8h2.500v2h-2.500zM527.8 413.8h2v2.500h-2zM406.2 413.8h2.500v2h-2.500zM372.8 413.7h2.500v2h-2.500zM862.4 413.8h2v2h-2zM666.500 413.9h2v2h-2zM637.6 413.500h3v1.500h-3zM872.4 413.500h3v2h-3zM658.1 413.7h2v2.500h-2zM932.8 413.500h2.500v2h-2.500zM569.4 414h2v2.500h-2zM342.3 413.500h3v2h-3zM589.1 413.8h2v1.500h-2zM604.500 413.8h2v2h-2zM253.3 413.9h2v2.500h-2zM548.7 414h1.500v2h-1.500zM503.9 413.8h2v2h-2zM647.4 413.6h2.500v2h-2.500zM615.6 413.9h1.500v2h-1.500zM367.2 413.9h2.500v1.500h-2.500zM394.8 413.9h2.500v1.500h-2.500zM351.500 413.8h3v2h-3zM435.8 413.500h2.500v2h-2.500zM957.1 413.8h2.500v2.500h-2.500zM702 413.6h3v2h-3zM7.7 413.6h2.500v2h-2.500zM598.6 413.8h2.500v2h-2.500zM19 138.8h3v2h-3zM57.3 138.7h3v2h-3zM880.4 139h2v2.500h-2zM89.500 140.500h1.500v2h-1.500zM124.9 141.8h2v2h-2zM883.9 140.9h2.500v2h-2.500zM42 141h2.500v2.500h-2.500zM623 141.2h2v2h-2zM371.2 140.3h3v2h-3zM938.6 141.4h3v2h-3zM62.7 138.8h1.500v1.500h-1.500zM726.3 139.500h3v2.500h-3zM477.7 141.6h1.500v1.500h-1.500zM569.9 139.9h2.500v2.500h-2.500zM399.500 139.9h1.500v2.500h-1.500zM382.9 138.500h1.500v2h-1.500zM711.3 139.6h1.500v2h-1.500zM532.6 141.1h2.500v1.500h-2.500zM88.3 141.4h3v1.500h-3zM99.4 138.4h2v2.500h-2zM54.7 140.7h2v2.500h-2zM828.8 140.2h2.500v2h-2.500zM958.2 141.3h2v2h-2zM322.3 140.1h1.500v2h-1.500zM949.2 139.1h2v1.500h-2zM301.9 139h2v2.500h-2zM491.500 139.7h1.500v2h-1.500zM293.7 141.500h2.500v2h-2.500zM294.2 138.500h2v2h-2zM895.3 140.6h3v2h-3zM352.4 141.2h2v2.500h-2zM882.8 140.2h1.500v2h-1.500zM10.2 138.3h3v2h-3zM35.8 138.9h2.500v2h-2.500zM194.1 138.8h3v2.500h-3zM391 140.9h2v2h-2zM57.3 139.7h1.500v1.500h-1.500zM133.2 141.500h3v2.500h-3zM174.6 141.7h3v2h-3zM479.3 140.7h2v2h-2zM514 138.6h2v1.500h-2zM448.1 138.8h1.500v1.500h-1.500zM399.3 140.6h2v2.500h-2zM659.1 138.6h1.500v2h-1.500zM42 141.3h2v2h-2zM840 141.2h3v2h-3zM298.6 139h3v2h-3zM147.500 141.2h2v2.500h-2zM935.3 139.3h2v2h-2zM216 140.2h1.500v2h-1.500zM446.9 140.9h2.500v2h-2.500zM652.4 138.500h2v1.500h-2zM631.9 138.8h3v1.500h-3zM280.500 139.4h2.500v1.500h-2.500zM194.1 139.1h2v1.500h-2zM194.9 139.9h2v2h-2zM33 140.4h1.500v2h-1.500zM188.2 138.6h2v1.500h-2zM166.8 139.4h2.500v2h-2.500zM317.7 139.500h1.500v2h-1.500zM777 140.9h2.500v1.500h-2.500zM717.6 138.500h2v2.500h-2zM444 138.1h3v1.500h-3zM397.7 140.8h2.500v2h-2.500zM75 140.9h2v2h-2zM164.6 141.8h2v1.500h-2zM808.9 141.500h2.500v2h-2.500zM144.8 138.4h2v1.500h-2zM148.6 139.1h3v1.500h-3zM312.7 139h3v1.500h-3zM487.500 139.500h2v2h-2zM388.8 138.8h2v2h-2zM698.1 140.1h2v1.500h-2zM16.500 141.8h2.500v2h-2.500zM662 138.9h2v2h-2zM807.7 142h2.500v2.500h-2.500z"/>
<g fill="#111"><rect x="546" y="370" width="6" height="14"/><rect x="555" y="378" width="8" height="4.500"/><rect x="303" y="163" width="6" height="6"/><rect x="273.500" y="238" width="3.500" height="5"/><rect x="16" y="232" width="14" height="3"/><rect x="126" y="266" width="8" height="3"/><rect x="150" y="268" width="8" height="3"/><rect x="172" y="270" width="8" height="3"/></g>
<filter id="nz" x="0" y="0" width="100%" height="100%"><feTurbulence type="fractalNoise" baseFrequency="0.4" numOctaves="2" seed="3" result="t"/><feColorMatrix type="matrix" values="0 0 0 0 0.35  0 0 0 0 0.28  0 0 0 0 0.12  0 0 0 1.6 -0.62"/></filter><rect x="2" y="137" width="960" height="279" filter="url(#nz)" opacity=".28"/>
<g font-family="'Liberation Sans',sans-serif" fill="#2a2a2a" font-size="20" text-anchor="middle">
<text x="54.500" y="204" textLength="16" lengthAdjust="spacingAndGlyphs">28</text>
<text x="156" y="187.500" textLength="17" lengthAdjust="spacingAndGlyphs">29</text>
<text x="255" y="192.500" textLength="17" lengthAdjust="spacingAndGlyphs">30</text>
<text x="117" y="142.500" textLength="17" lengthAdjust="spacingAndGlyphs">30</text>
<text x="354.500" y="185.500" textLength="15" lengthAdjust="spacingAndGlyphs">31</text>
<text x="455" y="188" textLength="17" lengthAdjust="spacingAndGlyphs">32</text>
<text x="554.500" y="174" textLength="17" lengthAdjust="spacingAndGlyphs">33</text>
<text x="654.500" y="186" textLength="17" lengthAdjust="spacingAndGlyphs">34</text>
<text x="755" y="186" textLength="17" lengthAdjust="spacingAndGlyphs">35</text>
<text x="855" y="186" textLength="17" lengthAdjust="spacingAndGlyphs">36</text>
<text x="955" y="186" textLength="17" lengthAdjust="spacingAndGlyphs">37</text>
<text x="98.500" y="326" textLength="17" lengthAdjust="spacingAndGlyphs">88</text>
<text x="95" y="234.500" textLength="17" lengthAdjust="spacingAndGlyphs" font-size="20" fill="#111" stroke="#111" stroke-width=".5">89</text>
</g>
<g fill="#1a1a1a">
<text x="110" y="227.500" font-size="14.500" textLength="104" lengthAdjust="spacingAndGlyphs">Hagenbüchach</text>
<text x="239" y="236" font-size="13.500" font-style="italic" stroke="#1a1a1a" stroke-width=".35" textLength="50" lengthAdjust="spacingAndGlyphs">Pirkach</text>
<text x="434" y="261" font-size="9" font-weight="bold" textLength="66" lengthAdjust="spacing">Höstesmeiher</text>
<text x="555" y="339" font-size="17.500" textLength="55" lengthAdjust="spacingAndGlyphs" stroke="#1a1a1a" stroke-width=".4">Pusch</text>
<text x="-8" y="368.500" font-size="18" font-style="italic" font-weight="bold" textLength="41" lengthAdjust="spacingAndGlyphs">dorf</text>
<clipPath id="zc"><rect x="380" y="147" width="130" height="12"/></clipPath><text x="389" y="150.500" font-size="16" font-style="italic" textLength="105" stroke="#1a1a1a" stroke-width=".35" lengthAdjust="spacingAndGlyphs" clip-path="url(#zc)">Zweifelsheim</text>
<text x="921" y="154" font-size="9" font-weight="bold" textLength="50" lengthAdjust="spacing">Burgrodt</text>
<text x="558" y="352" font-size="7" font-weight="bold" fill="#444">(383 S</text>
<text x="488" y="347" font-size="8" font-style="italic" font-weight="bold">ND</text>
<text x="497" y="215" font-size="7.500" font-style="italic" fill="#555" textLength="36" lengthAdjust="spacing">Poppenhof</text>
<text x="111" y="150.500" font-size="7.500" font-style="italic" fill="#333">Saga n</text>
</g>
<g font-family="'Liberation Sans',sans-serif" fill="#444" font-size="6.500">
<text x="317" y="243">394</text><text x="202" y="246">384</text><text x="60" y="236">(385)</text><text x="112" y="235">(383)</text>
<text x="9" y="282">383</text><text x="48" y="346">384</text><text x="146" y="359">389</text><text x="79" y="156">342</text>
<text x="384" y="225">385</text><text x="472" y="166">367</text><text x="546" y="190">368</text><text x="466" y="293">383</text>
<text x="536" y="310">378</text><text x="482" y="325">383</text><text x="356" y="368">375</text><text x="597" y="365">37t</text><text x="690" y="178">352</text>
</g>

<g>
<circle cx="132" cy="268" r="4.300" fill="#ffee00" stroke="#e0c000" stroke-width=".6"/>
<circle cx="194" cy="278.500" r="4.300" fill="#ffee00" stroke="#e0c000" stroke-width=".6"/>
<circle cx="523.500" cy="153" r="4.300" fill="#ffee00" stroke="#e0c000" stroke-width=".6"/>
<circle cx="311.500" cy="274.500" r="7.500" fill="#000"/>
<circle cx="311.500" cy="274.500" r="8" fill="none" stroke="#d8c820" stroke-width=".8"/>
<path d="M306 270 L311.500 280 L317 270" fill="none" stroke="#f4ecc0" stroke-width="1.300"/>
<rect x="169" y="230" width="6" height="6" fill="#2020d0"/>
<rect x="513" y="321" width="6" height="6" fill="#2020d0"/>
<rect x="858" y="142" width="3" height="3" fill="#a01020"/>
<g fill="#a81420" stroke="#701018" stroke-width=".6">
<rect x="857" y="144.500" width="7" height="7"/>
<rect x="822" y="164.500" width="7" height="7"/><rect x="824" y="166.500" width="7" height="7"/>
<rect x="843" y="166" width="7" height="7"/>
<rect x="818" y="173" width="7" height="7"/>
</g>
<g fill="#2418a8">
<path d="M-7 -3 L4.500 -3 L7 -0.500 L7 3 L-4.500 3 L-7 0.500 Z" transform="translate(537.500 159.500) rotate(40) scale(1.12)"/>
<path d="M-7 -3 L4.500 -3 L7 -0.500 L7 3 L-4.500 3 L-7 0.500 Z" transform="translate(498.500 187.500) rotate(40) scale(1.12)"/>
<path d="M-4.500 -3.200 L3 -3.200 L4.500 0 L4.500 3.200 L-3 3.200 L-4.500 0 Z" transform="translate(545.500 182.500) rotate(30) scale(1.1)"/>
<path d="M-7 -3 L4.500 -3 L7 -0.500 L7 3 L-4.500 3 L-7 0.500 Z" transform="translate(538 201) rotate(40) scale(1.12)"/>
<path d="M-7 -3 L4.500 -3 L7 -0.500 L7 3 L-4.500 3 L-7 0.500 Z" transform="translate(528 243.500) rotate(40) scale(1.12)"/>
<path d="M-7 -3 L4.500 -3 L7 -0.500 L7 3 L-4.500 3 L-7 0.500 Z" transform="translate(558 258) rotate(40) scale(1.12)"/>
<path d="M-7 -3 L4.500 -3 L7 -0.500 L7 3 L-4.500 3 L-7 0.500 Z" transform="translate(533 278.500) rotate(40) scale(1.12)"/>
</g>
</g>

<rect x="2" y="144" width="960" height="1" fill="#fbf070"/><rect x="2" y="145" width="960" height="1" fill="#181810"/><rect x="2" y="146" width="960" height="1.300" fill="#fff200"/>
<rect x="2" y="410" width="960" height="1" fill="#fbf070"/><rect x="2" y="411" width="960" height="1" fill="#181810"/><rect x="2" y="412" width="960" height="1.300" fill="#fff200"/>
<rect x="2" y="137" width="960" height="1" fill="#302820"/>
</g></svg>
<!--/MAP-->
<!--SCROLL-->
<!--RIGHT-->
<!-- main vertical scrollbar -->
<div class="abs" style="left:1052px;top:136px;width:1px;height:863px;background:#8a8a8a"></div><div class="abs" style="left:1052px;top:136px;width:22px;height:1px;background:#8a8a8a"></div><div class="abs" style="left:1074px;top:136px;width:1px;height:863px;background:#fff"></div>
<div class="abs" style="left:1053px;top:137px;width:21px;height:862px;background:#f4f3ee;background-image:repeating-conic-gradient(#ece9d8 0% 25%,#fff 0% 50%);background-size:2px 2px;"></div>
<div class="abs sbtn" style="left:1053px;top:137px;width:21px;height:19px;"><svg width="19" height="18" style="position:absolute;left:0;top:0"><path d="M5 11 L9.500 6 L14 11 Z" fill="#000"/></svg></div>
<div class="abs sbtn" style="left:1053px;top:156px;width:21px;height:21px;"></div>
<!-- right panel -->
<div class="abs" style="left:1079px;top:132px;width:201px;height:867px;background:#c0c0c0;border-left:1px solid #808080;border-top:1px solid #808080;box-sizing:border-box;box-shadow:inset 1px 1px 0 #fff;"></div>
<div class="abs" style="left:1086px;top:145px;width:189px;height:860px;border:1px solid #808080;box-shadow:inset 1px 1px 0 #fff,1px 1px 0 #fff;box-sizing:border-box;"></div>
<div class="abs" style="left:1092px;top:136px;font-weight:bold;font-size:14px;line-height:18px;background:#c0c0c0;padding:0 2px;white-space:nowrap;color:#000;letter-spacing:0.05px">Turn: 1 Pulse: 4</div>
<div class="abs" style="left:1090px;top:159px;width:177px;height:719px;border:1px solid #808080;box-shadow:inset 1px 1px 0 #fff,1px 1px 0 #fff;box-sizing:border-box;"></div>
<div class="abs" style="left:1095px;top:171px;width:167px;height:669px;box-sizing:border-box;border:1px solid;border-color:#808080 #fff #fff #808080;"></div>
<div class="abs" style="left:1096px;top:172px;width:165px;height:667px;box-sizing:border-box;border:1px solid;border-color:#404040 #d4d0c8 #d4d0c8 #404040;"></div>
<div class="abs" id="tree" style="left:1097px;top:173px;width:163px;height:644px;background:#000050;overflow:hidden;">
<svg class="abs" style="left:0;top:0" width="163" height="645" shape-rendering="crispEdges"><path d="M15 7.5H20 M34 21.5H39 M48 35.5H57 M53 49.5H58 M67 63.5H76 M72 77.5H77 M86 91.5H95 M86 105.5H95 M86 119.5H95 M86 133.5H95 M86 147.5H95 M72 161.5H77 M86 175.5H95 M86 189.5H95 M86 203.5H95 M86 217.5H95 M86 231.5H95 M72 245.5H77 M86 259.5H95 M86 273.5H95 M86 287.5H95 M86 301.5H95 M86 315.5H95 M53 329.5H58 M67 343.5H76 M72 357.5H77 M86 371.5H95 M86 385.5H95 M86 399.5H95 M86 413.5H95 M86 427.5H95 M72 441.5H77 M86 455.5H95 M86 469.5H95 M86 483.5H95 M86 497.5H95 M86 511.5H95 M72 525.5H77 M86 539.5H95 M86 553.5H95 M86 567.5H95 M86 581.5H95 M86 595.5H95 M29 609.5H38 M34 623.5H39 M48 637.5H57" stroke="#8f8fb4" stroke-dasharray="1 1" fill="none"/><path d="M28.5 14V17 M47.5 28V36 M47.5 36V45 M66.5 56V64 M66.5 64V73 M85.5 84V92 M85.5 92V106 M85.5 106V120 M85.5 120V134 M85.5 134V148 M66.5 82V157 M85.5 168V176 M85.5 176V190 M85.5 190V204 M85.5 204V218 M85.5 218V232 M66.5 166V241 M85.5 252V260 M85.5 260V274 M85.5 274V288 M85.5 288V302 M85.5 302V316 M47.5 54V325 M66.5 336V344 M66.5 344V353 M85.5 364V372 M85.5 372V386 M85.5 386V400 M85.5 400V414 M85.5 414V428 M66.5 362V437 M85.5 448V456 M85.5 456V470 M85.5 470V484 M85.5 484V498 M85.5 498V512 M66.5 446V521 M85.5 532V540 M85.5 540V554 M85.5 554V568 M85.5 568V582 M85.5 582V596 M28.5 26V610 M28.5 610V619 M47.5 630V638" stroke="#8f8fb4" stroke-dasharray="1 1" fill="none"/><path d="M5.5 3.5h8v8h-8z M24.5 17.5h8v8h-8z M43.5 45.5h8v8h-8z M62.5 73.5h8v8h-8z M62.5 157.5h8v8h-8z M62.5 241.5h8v8h-8z M43.5 325.5h8v8h-8z M62.5 353.5h8v8h-8z M62.5 437.5h8v8h-8z M62.5 521.5h8v8h-8z M24.5 619.5h8v8h-8z" stroke="#9494b8" fill="#000050"/><path d="M7.0 7.5h5 M26.0 21.5h5 M45.0 49.5h5 M64.0 77.5h5 M64.0 161.5h5 M64.0 245.5h5 M45.0 329.5h5 M64.0 357.5h5 M64.0 441.5h5 M64.0 525.5h5 M26.0 623.5h5" stroke="#fff" fill="none"/></svg>
<div class="tr" style="left:22px;top:0px;letter-spacing:-0.42px">Task Force HQ</div>
<div class="tr" style="left:41px;top:14px">(Psgr) <span style="letter-spacing:-1.4px">1s</span>t US Rifle Company</div>
<div class="tr" style="left:60px;top:28px">A&nbsp; US Rifle Company (M</div>
<div class="tr" style="left:60px;top:42px">(Psgr) <span style="letter-spacing:-1.4px">1s</span>t US Rifle Platoon</div>
<div class="tr" style="left:79px;top:56px"><span style="letter-spacing:-1.4px">1s</span>t US Rifle Platoon</div>
<div class="tr" style="left:79px;top:70px">(Psgr) <span style="letter-spacing:-1.4px">1s</span>t US Rifle Squad</div>
<div class="tr" style="left:98px;top:84px">(Psgr) <span style="letter-spacing:-1.4px">1s</span>t US Rifle</div>
<div class="tr" style="left:98px;top:98px">(Psgr) <span style="letter-spacing:-1.4px">1s</span>t US Rifle</div>
<div class="tr" style="left:98px;top:112px"><span style="letter-spacing:-1.4px">1s</span>t US Rifle Squad</div>
<div class="tr" style="left:98px;top:126px"><span style="letter-spacing:-1.4px">1s</span>t US Rifle Squad</div>
<div class="tr" style="left:98px;top:140px"><span style="letter-spacing:-1.4px">1s</span>t US Rifle Squad</div>
<div class="tr" style="left:79px;top:154px">(Psgr) 2nd US Rifle Squad</div>
<div class="tr" style="left:98px;top:168px">(Psgr) 2nd US Rifle</div>
<div class="tr" style="left:98px;top:182px">(Psgr) 2nd US Rifle</div>
<div class="tr" style="left:98px;top:196px">2nd US Rifle Squad</div>
<div class="tr" style="left:98px;top:210px">2nd US Rifle Squad</div>
<div class="tr" style="left:98px;top:224px">2nd US Rifle Squad</div>
<div class="tr" style="left:79px;top:238px">(Psgr) 3rd US Rifle Squad</div>
<div class="tr" style="left:98px;top:252px">(Psgr) 3rd US Rifle</div>
<div class="tr" style="left:98px;top:266px">(Psgr) 3rd US Rifle</div>
<div class="tr" style="left:98px;top:280px">3rd US Rifle Squad</div>
<div class="tr" style="left:98px;top:294px">3rd US Rifle Squad</div>
<div class="tr" style="left:98px;top:308px">3rd US Rifle Squad</div>
<div class="tr" style="left:60px;top:322px">(Psgr) <span style="letter-spacing:-1.4px">1s</span>t US Rifle Platoon</div>
<div class="tr" style="left:79px;top:336px"><span style="letter-spacing:-1.4px">1s</span>t US Rifle Platoon</div>
<div class="tr" style="left:79px;top:350px">(Psgr) <span style="letter-spacing:-1.4px">1s</span>t US Rifle Squad</div>
<div class="tr" style="left:98px;top:364px">(Psgr) <span style="letter-spacing:-1.4px">1s</span>t US Rifle</div>
<div class="tr" style="left:98px;top:378px">(Psgr) <span style="letter-spacing:-1.4px">1s</span>t US Rifle</div>
<div class="tr" style="left:98px;top:392px"><span style="letter-spacing:-1.4px">1s</span>t US Rifle Squad</div>
<div class="tr" style="left:98px;top:406px"><span style="letter-spacing:-1.4px">1s</span>t US Rifle Squad</div>
<div class="tr" style="left:98px;top:420px"><span style="letter-spacing:-1.4px">1s</span>t US Rifle Squad</div>
<div class="tr" style="left:79px;top:434px">(Psgr) 2nd US Rifle Squad</div>
<div class="tr" style="left:98px;top:448px">(Psgr) 2nd US Rifle</div>
<div class="tr" style="left:98px;top:462px">(Psgr) 2nd US Rifle</div>
<div class="tr" style="left:98px;top:476px">2nd US Rifle Squad</div>
<div class="tr" style="left:98px;top:490px">2nd US Rifle Squad</div>
<div class="tr" style="left:98px;top:504px">2nd US Rifle Squad</div>
<div class="tr" style="left:79px;top:518px">(Psgr) 3rd US Rifle Squad</div>
<div class="tr" style="left:98px;top:532px">(Psgr) 3rd US Rifle</div>
<div class="tr" style="left:98px;top:546px">(Psgr) 3rd US Rifle</div>
<div class="tr" style="left:98px;top:560px">3rd US Rifle Squad</div>
<div class="tr" style="left:98px;top:574px">3rd US Rifle Squad</div>
<div class="tr" style="left:98px;top:588px">3rd US Rifle Squad</div>
<div class="tr" style="left:41px;top:602px;letter-spacing:-0.33px">2nd US Tank Platoon</div>
<div class="tr" style="left:41px;top:616px;letter-spacing:-0.33px">A US Aircraft Flight</div>
<div class="tr" style="left:60px;top:630px;letter-spacing:-0.33px"><span style="letter-spacing:-1.4px">1s</span>t US Aircraft Section</div>
</div>
<!-- hscroll -->
<div class="abs" style="left:1097px;top:817px;width:163px;height:21px;background:linear-gradient(to bottom,#f3f1ec,#fefefb 50%,#fff);"></div>
<div class="abs xpb" style="left:1097px;top:817px;width:20px;height:21px;"><svg width="18" height="18" style="position:absolute;left:0;top:0"><path d="M11 5 L7 9 L11 13" fill="none" stroke="#4d6185" stroke-width="2.200"/></svg></div>
<div class="abs xpb" style="left:1240px;top:817px;width:20px;height:21px;"><svg width="18" height="18" style="position:absolute;left:0;top:0"><path d="M7 5 L11 9 L7 13" fill="none" stroke="#4d6185" stroke-width="2.200"/></svg></div>
<div class="abs xpb" style="left:1118px;top:817px;width:76px;height:21px;"><svg width="73" height="18" style="position:absolute;left:0;top:0"><path d="M33.500 6 V13 M35.500 6 V13 M37.500 6 V13 M39.500 6 V13" stroke="#8fa6e0" stroke-width="1"/></svg></div>
<!-- second navy box -->
<div class="abs" style="left:1095px;top:843px;width:167px;height:20px;box-sizing:border-box;border:1px solid;border-color:#808080 #fff #fff #808080;"></div>
<div class="abs" style="left:1096px;top:844px;width:165px;height:18px;box-sizing:border-box;border:1px solid;border-color:#404040 #d4d0c8 #d4d0c8 #404040;background:#000050"></div>
<!-- Map/Hex info -->
<div class="abs" style="left:1091px;top:901px;width:177px;height:110px;border:1px solid #808080;box-shadow:inset 1px 1px 0 #fff,1px 1px 0 #fff;box-sizing:border-box;"></div>
<div class="abs" style="left:1097px;top:892px;font-weight:bold;font-size:14px;line-height:18px;background:#c0c0c0;padding:0 1px;white-space:nowrap;color:#000;letter-spacing:0.32px">Map/Hex Info [Player:1]</div>
<div class="mh" style="left:1100px;top:913px">Loc: -</div>
<div class="mh" style="left:1100px;top:927px">PRIMARY: -</div>
<div class="mh" style="left:1100px;top:942px">SECONDARY: -</div>
<div class="mh" style="left:1100px;top:957px">LOS: -</div>
<div class="mh" style="left:1100px;top:969px">CONCEAL: -</div>
<div class="mh" style="left:1198px;top:957px">COVER: -</div>
<div class="mh" style="left:1198px;top:969px">FOLIAGE: -</div>
<svg class="abs" style="left:1223px;top:911px" width="39" height="25" viewBox="0 0 39 25"><rect width="39" height="25" fill="#fff"/><path d="M0 1 H39 M0 4.800 H39 M0 8.600 H39 M0 12.400 H39 M0 16.200 H39 M0 20 H39 M0 23.800 H39" stroke="#e8141c" stroke-width="2"/><rect width="16" height="13.500" fill="#2828b8"/><path d="M1 2 H15 M1 5 H15 M1 8 H15 M1 11 H15" stroke="#6a6ad0" stroke-width="1" stroke-dasharray="1 1"/></svg>
<div class="abs" style="left:1100px;top:987px;width:158px;height:6px;box-sizing:border-box;border:1px solid;border-color:#808080 #fff #fff #808080;"></div>
<!--/RIGHT-->
<!--DIALOG-->
<div class="abs" id="dlg" style="left:608px;top:192px;width:436px;height:409px;background:#0831d9;border-radius:7px 7px 0 0;"></div>
<div class="abs" style="left:608px;top:192px;width:436px;height:36px;border-radius:7px 7px 0 0;background:linear-gradient(to bottom,#0a4fd0 0px,#2a78f4 2px,#0a62f0 5px,#0458e6 10px,#0453df 20px,#0558e8 28px,#0650da 33px,#0340c8 36px);box-shadow:inset 1px 0 0 #0b3fc0,inset -1px 0 0 #0b3fc0;"></div>
<div class="abs" id="dlgtitle" style="left:616.5px;top:204px;color:#fff;font-weight:bold;font-size:15.5px;line-height:18px;white-space:pre;letter-spacing:0.1px;text-shadow:1px 1px 0 #0a2a86;">Combat Phase Reports  (Turn: 1  Pulse: 4)</div>
<div class="abs" style="left:612px;top:228px;width:428px;height:369px;background:#ece9d8;"></div>
<div class="abs" style="left:613px;top:233px;width:421px;height:275px;box-sizing:border-box;border:1px solid;border-color:#808080 #fff #fff #808080;"></div>
<div class="abs" style="left:614px;top:234px;width:419px;height:273px;box-sizing:border-box;border:1px solid;border-color:#404040 #d4d0c8 #d4d0c8 #404040;background:#00407f;overflow:hidden;">
<div class="rt" style="top:-2px">Round is in flight</div>
<div class="rt" style="top:24px">Round: 5</div>
<div class="rt" style="top:37px">Round is in flight</div>
<div class="rt" style="top:63px">Round: 6</div>
<div class="rt" style="top:76px">Round is in flight</div>
<div class="rt" style="top:102px">Firing Unit: 2 x M2A2.  Stationary.  Face: E, . Loc:630</div>
<div class="rt" style="top:115px">Target: 4th CIS Grenade Launcher Platoon-1 Loc:2484</div>
<div class="rt" style="top:128px">Range: 3407m</div>
<div class="rt" style="top:154px">Round: 1</div>
<div class="rt" style="top:167px">Round is in flight</div>
<div class="rt" style="top:193px">Round: 2</div>
<div class="rt" style="top:206px">Round is in flight</div>
<div class="rt" style="top:232px">Round: 3</div>
<div class="rt" style="top:245px">Round is in flight</div>
</div>
<!-- dialog scrollbar -->
<div class="abs" style="left:1012px;top:236px;width:20px;height:270px;background:linear-gradient(to right,#f3f1ec,#fefefb 50%,#fff);"></div>
<div class="abs xpb" style="left:1013px;top:236px;width:19px;height:20px;"><svg width="17" height="18" style="position:absolute;left:0;top:0"><path d="M4.500 11 L8.500 7 L12.500 11" fill="none" stroke="#4d6185" stroke-width="2.200"/></svg></div>
<div class="abs xpb" style="left:1013px;top:486px;width:19px;height:20px;"><svg width="17" height="18" style="position:absolute;left:0;top:0"><path d="M4.500 7 L8.500 11 L12.500 7" fill="none" stroke="#4d6185" stroke-width="2.200"/></svg></div>
<div class="abs xpb" style="left:1013px;top:293px;width:19px;height:31px;"><svg width="17" height="29" style="position:absolute;left:0;top:0"><path d="M5 11.500 H12 M5 13.500 H12 M5 15.500 H12 M5 17.500 H12" stroke="#8fa6e0" stroke-width="1"/></svg></div>
<!--/DIALOG-->
<!--LOGO-->
<svg class="abs" style="left:1150px;top:0" width="130" height="100" viewBox="1150 0 130 100">
<defs><filter id="lsh" x="-10%" y="-30%" width="120%" height="180%"><feGaussianBlur stdDeviation="1.2"/></filter></defs>
<!-- window buttons -->
<g>
<rect x="1194" y="3" width="25" height="25" rx="3" fill="#4a74d6" stroke="#a4bcee" stroke-width="1"/>
<rect x="1198" y="20" width="10" height="4" fill="#fff"/>
<rect x="1223" y="3" width="25" height="25" rx="3" fill="#4a74d6" stroke="#a4bcee" stroke-width="1"/>
<path d="M1231.500 9 V6.500 H1244 V17.500 H1241" fill="none" stroke="#fff" stroke-width="2.600"/>
<path d="M1227.500 13 H1239 V23.500 H1227.500 Z" fill="none" stroke="#fff" stroke-width="1.600"/><path d="M1227 13 H1239.500" stroke="#fff" stroke-width="3"/>
<rect x="1252" y="3" width="26" height="25" rx="3" fill="#c6566a" stroke="#e4a8b4" stroke-width="1"/>
<path d="M1256.500 7 L1273 24 M1273 7 L1256.500 24" stroke="#fff" stroke-width="3.600"/>
</g>
<!-- AG logo -->
<g opacity="0.82">
<ellipse cx="1216" cy="36" rx="27.200" ry="25.200" fill="none" stroke="#fff" stroke-width="7" opacity=".85"/>
<ellipse cx="1217.200" cy="34.800" rx="27.200" ry="25.200" fill="none" stroke="#8e949a" stroke-width="5"/>
<path d="M1209 11.500 C1222 10 1234 17 1238.500 29" fill="none" stroke="#9aa0a6" stroke-width="3"/>
<path d="M1206 13.500 L1196.500 41 L1219 31.500" fill="none" stroke="#8e949a" stroke-width="3.600" stroke-linejoin="round"/>
<path d="M1204.500 14.500 L1234 58.500" stroke="#fff" stroke-width="7" opacity=".95"/>
<path d="M1207 13 L1236.500 57" stroke="#8e949a" stroke-width="3.200"/>
</g>
<text x="1219.500" y="85" text-anchor="middle" font-family="'DejaVu Sans','Liberation Sans',sans-serif" font-weight="bold" font-size="14" fill="#555" opacity=".45" filter="url(#lsh)" textLength="105" lengthAdjust="spacingAndGlyphs">WWW.AG.RU</text>
<text x="1218.500" y="83" text-anchor="middle" font-family="'DejaVu Sans','Liberation Sans',sans-serif" font-weight="bold" font-size="14" fill="#5a5a5a" stroke="#f6f6f6" stroke-width="3.800" paint-order="stroke" stroke-linejoin="round" textLength="105" lengthAdjust="spacingAndGlyphs">WWW.AG.RU</text>
<text x="1218.500" y="83" text-anchor="middle" font-family="'DejaVu Sans','Liberation Sans',sans-serif" font-weight="bold" font-size="14" fill="#5a5a5a" stroke="#5a5a5a" stroke-width=".7" textLength="105" lengthAdjust="spacingAndGlyphs">WWW.AG.RU</text>
</svg>
<!--/LOGO-->
<div id="status" class="abs"></div>
<div id="statustext" class="abs">Combat Phase Complete.</div>
<div id="taskstrip" class="abs"></div>
</body>
</html>
